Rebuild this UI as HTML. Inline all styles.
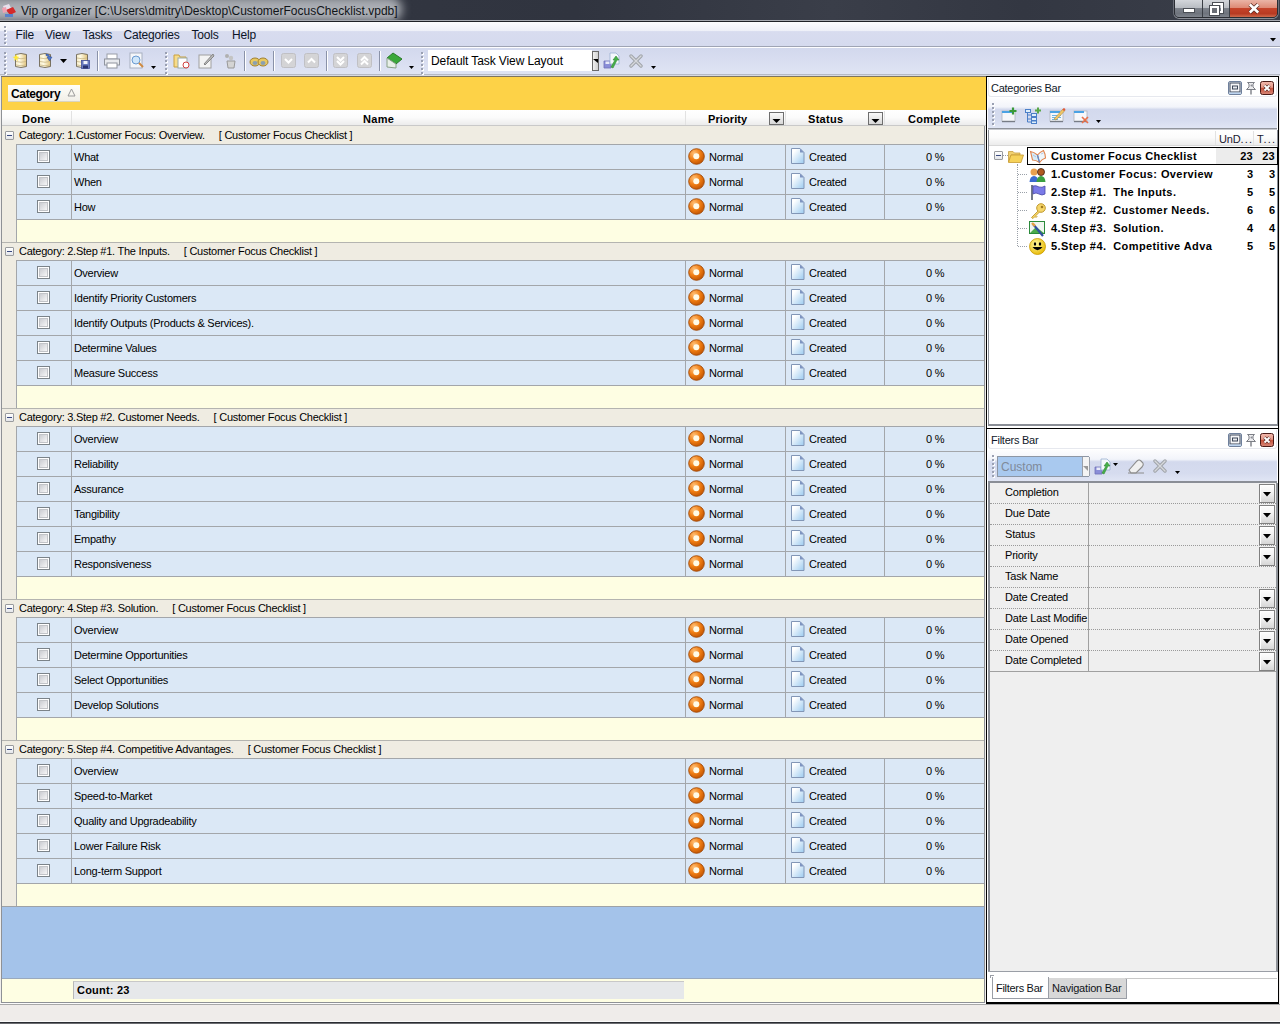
<!DOCTYPE html><html><head><meta charset="utf-8"><style>*{margin:0;padding:0;box-sizing:content-box}
html,body{width:1280px;height:1024px;overflow:hidden;background:#f0eeec;font-family:"Liberation Sans", sans-serif;position:relative}
.ab{position:absolute}
.t11{font-size:11px;letter-spacing:-0.25px;color:#000;white-space:nowrap;position:absolute;line-height:13px}
.b11{font-size:11px;font-weight:bold;color:#000;white-space:nowrap;position:absolute;line-height:13px}
</style></head><body><div class="ab" style="left:0;top:0;width:1280px;height:20px;overflow:hidden;background:linear-gradient(90deg,#343843 0%,#30343f 45%,#3a3e49 65%,#333742 80%,#3b3f4a 100%)"><div class="ab" style="left:-20px;top:-4px;width:422px;height:26px;border-radius:13px;background:linear-gradient(#9ea2a8,#b0b3b9 60%,#a4a8ae);filter:blur(5px)"></div></div><div class="ab" style="left:0;top:20px;width:1280px;height:1px;background:#a6a9b0"></div><div class="ab" style="left:0;top:21px;width:1280px;height:1px;background:#1e2126"></div><svg class="ab" style="left:1px;top:2px" width="16" height="16" viewBox="0 0 16 16"><path d="M2 4 L8 2 L10 6 L4 9 Z" fill="#e8e0ec"/><path d="M5 8 L12 5 L15 10 L9 13 Z" fill="#d42a2a"/><path d="M4 12 L12 12 L12 15 L4 15 Z" fill="#5a82c8"/><path d="M1 6 L5 5 L6 10 L2 11 Z" fill="#f0a0b0"/></svg><div class="ab" style="left:21px;top:4px;font-size:12px;line-height:15px;color:#101418;white-space:nowrap">Vip organizer [C:\Users\dmitry\Desktop\CustomerFocusChecklist.vpdb]</div><div class="ab" style="left:1174px;top:-1px;width:102px;height:17px;border:1px solid #2a2d33;border-radius:0 0 5px 5px;overflow:hidden;box-shadow:0 1px 0 rgba(220,222,228,0.5), 1px 0 0 rgba(220,222,228,0.3), -1px 0 0 rgba(220,222,228,0.3)"><div class="ab" style="left:0;top:0;width:27px;height:17px;background:linear-gradient(#d3d6db 0%,#b9bdc3 45%,#7d828b 50%,#6f747d 80%,#80858e 100%)"></div><div class="ab" style="left:27px;top:0;width:1px;height:17px;background:#3a3e45"></div><div class="ab" style="left:28px;top:0;width:26px;height:17px;background:linear-gradient(#d3d6db 0%,#b9bdc3 45%,#7d828b 50%,#6f747d 80%,#80858e 100%)"></div><div class="ab" style="left:54px;top:0;width:1px;height:17px;background:#3a3e45"></div><div class="ab" style="left:55px;top:0;width:47px;height:17px;background:linear-gradient(#eab4a6 0%,#de8a76 45%,#c5432a 50%,#b83a22 80%,#cf6a4c 100%)"></div><div class="ab" style="left:9px;top:9px;width:10px;height:3px;background:#fff;outline:1px solid #4a4e55"></div><div class="ab" style="left:38px;top:3px;width:6px;height:6px;border:2px solid #fff;outline:1px solid #4a4e55"></div><div class="ab" style="left:35px;top:6px;width:5px;height:5px;border:2px solid #fff;background:#6a6e76;outline:1px solid #4a4e55"></div><svg class="ab" style="left:73px;top:3px" width="12" height="11" viewBox="0 0 12 11"><path d="M1.8 1.5 L10.2 9.5 M10.2 1.5 L1.8 9.5" stroke="#5a3028" stroke-width="4"/><path d="M1.8 1.5 L10.2 9.5 M10.2 1.5 L1.8 9.5" stroke="#fff" stroke-width="2.6"/></svg></div><div class="ab" style="left:0;top:22px;width:1280px;height:24px;background:linear-gradient(#fbfcfe 0,#eef0f8 36%,#d8dcef 40%,#d5daee 100%)"></div><div class="ab" style="left:0;top:46px;width:1280px;height:1px;background:#9fa4b4"></div><div class="ab" style="left:4px;top:26px;width:2px;height:2px;background:#9aa0b2;box-shadow:1px 1px 0 #fff"></div><div class="ab" style="left:4px;top:30px;width:2px;height:2px;background:#9aa0b2;box-shadow:1px 1px 0 #fff"></div><div class="ab" style="left:4px;top:34px;width:2px;height:2px;background:#9aa0b2;box-shadow:1px 1px 0 #fff"></div><div class="ab" style="left:4px;top:38px;width:2px;height:2px;background:#9aa0b2;box-shadow:1px 1px 0 #fff"></div><div class="ab" style="left:4px;top:42px;width:2px;height:2px;background:#9aa0b2;box-shadow:1px 1px 0 #fff"></div><div class="ab" style="left:15.5px;top:28px;font-size:12px;line-height:15px;color:#0c1426;letter-spacing:-0.2px;white-space:nowrap">File</div><div class="ab" style="left:45px;top:28px;font-size:12px;line-height:15px;color:#0c1426;letter-spacing:-0.2px;white-space:nowrap">View</div><div class="ab" style="left:82.5px;top:28px;font-size:12px;line-height:15px;color:#0c1426;letter-spacing:-0.2px;white-space:nowrap">Tasks</div><div class="ab" style="left:123.5px;top:28px;font-size:12px;line-height:15px;color:#0c1426;letter-spacing:-0.2px;white-space:nowrap">Categories</div><div class="ab" style="left:191.5px;top:28px;font-size:12px;line-height:15px;color:#0c1426;letter-spacing:-0.2px;white-space:nowrap">Tools</div><div class="ab" style="left:232px;top:28px;font-size:12px;line-height:15px;color:#0c1426;letter-spacing:-0.2px;white-space:nowrap">Help</div><svg class="ab" style="left:1270px;top:38px" width="7" height="4"><path d="M0 0 H6 L3 3.5 Z" fill="#000"/></svg><div class="ab" style="left:0;top:47px;width:1280px;height:1px;background:#fdfdff"></div><div class="ab" style="left:0;top:48px;width:1280px;height:26px;background:linear-gradient(#d2d8ed,#dfe4f4)"></div><div class="ab" style="left:0;top:74px;width:1280px;height:2px;background:linear-gradient(#a4a9b6,#e8ebf2)"></div><div class="ab" style="left:4px;top:52px;width:2px;height:2px;background:#9aa0b2;box-shadow:1px 1px 0 #fff"></div><div class="ab" style="left:4px;top:56px;width:2px;height:2px;background:#9aa0b2;box-shadow:1px 1px 0 #fff"></div><div class="ab" style="left:4px;top:60px;width:2px;height:2px;background:#9aa0b2;box-shadow:1px 1px 0 #fff"></div><div class="ab" style="left:4px;top:64px;width:2px;height:2px;background:#9aa0b2;box-shadow:1px 1px 0 #fff"></div><div class="ab" style="left:4px;top:68px;width:2px;height:2px;background:#9aa0b2;box-shadow:1px 1px 0 #fff"></div><div class="ab" style="left:4px;top:72px;width:2px;height:2px;background:#9aa0b2;box-shadow:1px 1px 0 #fff"></div><svg class="ab" style="left:12px;top:52px" width="17" height="17" viewBox="0 0 17 17"><defs><linearGradient id="dbg" x1="0" x2="1"><stop offset="0" stop-color="#f6ecc8"/><stop offset="0.35" stop-color="#fffbe6"/><stop offset="1" stop-color="#e2c47c"/></linearGradient></defs><path d="M3.5 2.5 Q9 0.5 14.5 2.5 V14.5 Q9 16.5 3.5 14.5 Z" fill="url(#dbg)" stroke="#6e6656" stroke-width="0.9"/><path d="M4 6 Q9 7.5 14 6 M4 9.5 Q9 11 14 9.5 M4 13 Q9 14.5 14 13" fill="none" stroke="#c9b888" stroke-width="0.8"/><path d="M4 2 L5 4.5 L7.5 5 L5.3 6.3 L6 9 L4 7.2 L2 9 L2.7 6.3 L0.5 5 L3 4.5 Z" fill="#ffe838"/></svg><svg class="ab" style="left:36px;top:52px" width="17" height="17" viewBox="0 0 17 17"><defs><linearGradient id="dbg" x1="0" x2="1"><stop offset="0" stop-color="#f6ecc8"/><stop offset="0.35" stop-color="#fffbe6"/><stop offset="1" stop-color="#e2c47c"/></linearGradient></defs><path d="M3.5 2.5 Q9 0.5 14.5 2.5 V14.5 Q9 16.5 3.5 14.5 Z" fill="url(#dbg)" stroke="#6e6656" stroke-width="0.9"/><path d="M4 6 Q9 7.5 14 6 M4 9.5 Q9 11 14 9.5 M4 13 Q9 14.5 14 13" fill="none" stroke="#c9b888" stroke-width="0.8"/><path d="M10 2 Q13 1.5 14 5 L16 5 L13.5 9 L11 5 L12.5 5 Q12 3.5 10 3.5 Z" fill="#4f78d0" stroke="#2a4a90" stroke-width="0.5"/></svg><svg class="ab" style="left:60px;top:59px" width="8" height="5"><path d="M0 0 H7 L3.5 4 Z" fill="#000"/></svg><svg class="ab" style="left:73px;top:52px" width="17" height="17" viewBox="0 0 17 17"><defs><linearGradient id="dbg" x1="0" x2="1"><stop offset="0" stop-color="#f6ecc8"/><stop offset="0.35" stop-color="#fffbe6"/><stop offset="1" stop-color="#e2c47c"/></linearGradient></defs><path d="M3.5 2.5 Q9 0.5 14.5 2.5 V14.5 Q9 16.5 3.5 14.5 Z" fill="url(#dbg)" stroke="#6e6656" stroke-width="0.9"/><path d="M4 6 Q9 7.5 14 6 M4 9.5 Q9 11 14 9.5 M4 13 Q9 14.5 14 13" fill="none" stroke="#c9b888" stroke-width="0.8"/><rect x="8.5" y="8.5" width="8" height="8" fill="#6a7cc0" stroke="#44509a" stroke-width="0.8"/><rect x="10.5" y="9" width="4" height="3" fill="#f0f2fa"/><rect x="10" y="13.5" width="5" height="3" fill="#2a3470"/></svg><div class="ab" style="left:97px;top:51px;width:1px;height:20px;background:#8a92a8;box-shadow:1px 0 0 #fff"></div><svg class="ab" style="left:104px;top:53px" width="16" height="16" viewBox="0 0 16 16"><rect x="3" y="1" width="10" height="5" fill="#fff" stroke="#9a9ea8"/><rect x="0.5" y="6" width="15" height="6" fill="#e8eaee" stroke="#8f949e"/><rect x="3" y="10" width="10" height="5" fill="#fff" stroke="#8f949e"/></svg><svg class="ab" style="left:129px;top:52px" width="16" height="17" viewBox="0 0 16 17"><rect x="1" y="1" width="12" height="15" fill="#f4f6fa" stroke="#a8b0c0"/><circle cx="7" cy="8" r="4" fill="#cfe6fa" stroke="#6a9ad0"/><path d="M10 11 L14 15" stroke="#d08a40" stroke-width="2"/></svg><svg class="ab" style="left:151px;top:66px" width="6" height="4"><path d="M0 0 H5 L2.5 3 Z" fill="#000"/></svg><div class="ab" style="left:165px;top:52px;width:2px;height:2px;background:#9aa0b2;box-shadow:1px 1px 0 #fff"></div><div class="ab" style="left:165px;top:56px;width:2px;height:2px;background:#9aa0b2;box-shadow:1px 1px 0 #fff"></div><div class="ab" style="left:165px;top:60px;width:2px;height:2px;background:#9aa0b2;box-shadow:1px 1px 0 #fff"></div><div class="ab" style="left:165px;top:64px;width:2px;height:2px;background:#9aa0b2;box-shadow:1px 1px 0 #fff"></div><div class="ab" style="left:165px;top:68px;width:2px;height:2px;background:#9aa0b2;box-shadow:1px 1px 0 #fff"></div><div class="ab" style="left:165px;top:72px;width:2px;height:2px;background:#9aa0b2;box-shadow:1px 1px 0 #fff"></div><svg class="ab" style="left:173px;top:52px" width="17" height="17" viewBox="0 0 17 17"><path d="M1 3 H6 L7 5 H13 V15 H1 Z" fill="#f7dc8a" stroke="#c9a040"/><rect x="5" y="6" width="9" height="10" fill="#fff" stroke="#9aa"/><circle cx="13" cy="13" r="3" fill="#fff" stroke="#d04040"/></svg><svg class="ab" style="left:198px;top:52px" width="17" height="17" viewBox="0 0 17 17"><rect x="1" y="3" width="12" height="13" fill="#f3f3f3" stroke="#a0a0a0"/><path d="M6 12 L15 2 L16 4 L7 13 Z" fill="#b8b8b8" stroke="#888"/></svg><svg class="ab" style="left:222px;top:52px" width="17" height="17" viewBox="0 0 17 17"><circle cx="5" cy="4" r="2" fill="#b0b0b0"/><circle cx="9" cy="6" r="2.2" fill="#c4c4c4"/><path d="M5 9 H13 L12 16 H6 Z" fill="#d4d4d4" stroke="#999"/></svg><div class="ab" style="left:244px;top:51px;width:1px;height:20px;background:#8a92a8;box-shadow:1px 0 0 #fff"></div><svg class="ab" style="left:249px;top:54px" width="20" height="14" viewBox="0 0 20 14"><ellipse cx="6" cy="8" rx="5" ry="4" fill="#e8c860" stroke="#a08030"/><ellipse cx="14" cy="8" rx="5" ry="4" fill="#e8c860" stroke="#a08030"/><ellipse cx="6" cy="9" rx="2.5" ry="2" fill="#8aa0b0"/><ellipse cx="14" cy="9" rx="2.5" ry="2" fill="#8aa0b0"/></svg><div class="ab" style="left:273px;top:51px;width:1px;height:20px;background:#8a92a8;box-shadow:1px 0 0 #fff"></div><svg class="ab" style="left:281px;top:53px" width="15" height="15" viewBox="0 0 15 15"><rect x="0.5" y="0.5" width="14" height="14" rx="2" fill="#d4d4d6" stroke="#c0c0c4"/><path d="M4 6 L7.5 9.5 L11 6" fill="none" stroke="#fff" stroke-width="2"/></svg><svg class="ab" style="left:304px;top:53px" width="15" height="15" viewBox="0 0 15 15"><rect x="0.5" y="0.5" width="14" height="14" rx="2" fill="#d4d4d6" stroke="#c0c0c4"/><path d="M4 9.5 L7.5 6 L11 9.5" fill="none" stroke="#fff" stroke-width="2"/></svg><div class="ab" style="left:326px;top:51px;width:1px;height:20px;background:#8a92a8;box-shadow:1px 0 0 #fff"></div><svg class="ab" style="left:333px;top:53px" width="15" height="15" viewBox="0 0 15 15"><rect x="0.5" y="0.5" width="14" height="14" rx="2" fill="#d4d4d6" stroke="#c0c0c4"/><path d="M4 4 L7.5 7.5 L11 4 M4 8 L7.5 11.5 L11 8" fill="none" stroke="#fff" stroke-width="2"/></svg><svg class="ab" style="left:357px;top:53px" width="15" height="15" viewBox="0 0 15 15"><rect x="0.5" y="0.5" width="14" height="14" rx="2" fill="#d4d4d6" stroke="#c0c0c4"/><path d="M4 7.5 L7.5 4 L11 7.5 M4 11.5 L7.5 8 L11 11.5" fill="none" stroke="#fff" stroke-width="2"/></svg><div class="ab" style="left:379px;top:51px;width:1px;height:20px;background:#8a92a8;box-shadow:1px 0 0 #fff"></div><svg class="ab" style="left:385px;top:52px" width="18" height="17" viewBox="0 0 18 17"><path d="M2 6 L8 1 L17 7 L11 12 Z" fill="#3aa83a" stroke="#2a7a2a"/><path d="M2 6 L2 15 L11 16 L11 12 Z" fill="#e8f0e8" stroke="#88a088"/></svg><svg class="ab" style="left:409px;top:66px" width="6" height="4"><path d="M0 0 H5 L2.5 3 Z" fill="#000"/></svg><div class="ab" style="left:421px;top:52px;width:2px;height:2px;background:#9aa0b2;box-shadow:1px 1px 0 #fff"></div><div class="ab" style="left:421px;top:56px;width:2px;height:2px;background:#9aa0b2;box-shadow:1px 1px 0 #fff"></div><div class="ab" style="left:421px;top:60px;width:2px;height:2px;background:#9aa0b2;box-shadow:1px 1px 0 #fff"></div><div class="ab" style="left:421px;top:64px;width:2px;height:2px;background:#9aa0b2;box-shadow:1px 1px 0 #fff"></div><div class="ab" style="left:421px;top:68px;width:2px;height:2px;background:#9aa0b2;box-shadow:1px 1px 0 #fff"></div><div class="ab" style="left:421px;top:72px;width:2px;height:2px;background:#9aa0b2;box-shadow:1px 1px 0 #fff"></div><div class="ab" style="left:428px;top:50px;width:164px;height:21px;background:#fff"></div><div class="ab" style="left:431px;top:54px;font-size:12px;line-height:15px;color:#000;letter-spacing:-0.1px;white-space:nowrap">Default Task View Layout</div><div class="ab" style="left:592px;top:51px;width:7px;height:20px;background:linear-gradient(90deg,#f0f0f0,#d0d0d0);border:1px solid #6a6a6a;box-sizing:border-box"></div><svg class="ab" style="left:593px;top:59px" width="6" height="5"><path d="M0 0 H5 L5 4 Z" fill="#000"/></svg><svg class="ab" style="left:603px;top:52px" width="18" height="17" viewBox="0 0 18 17"><path d="M1 9 H8 V16 H1 Z" fill="#8a8ed8" stroke="#6f72b8" stroke-width="0.8"/><rect x="2.5" y="9.5" width="4" height="2.5" fill="#e8eaf8"/><path d="M7 1 H13 L16 4 V12 H7 Z" fill="#f4f8fc" stroke="#9ab0d0" stroke-width="0.8"/><path d="M8 15 L12 8 L10 8 L13 4 L16 8 L14 8 L10 16 Z" fill="#46b04a" stroke="#2f8a30" stroke-width="0.6"/></svg><svg class="ab" style="left:629px;top:54px" width="14" height="14" viewBox="0 0 14 14"><path d="M2 2 L12 12 M12 2 L2 12" stroke="#a0a4aa" stroke-width="3.4" stroke-linecap="round"/><path d="M2 2 L12 12 M12 2 L2 12" stroke="#d6d8dc" stroke-width="1.4" stroke-linecap="round"/></svg><svg class="ab" style="left:651px;top:66px" width="6" height="4"><path d="M0 0 H5 L2.5 3 Z" fill="#000"/></svg><div class="ab" style="left:1px;top:76px;width:982px;height:925px;border:1px solid #8e9196;background:#a4c3ea"></div><div class="ab" style="left:984px;top:76px;width:2px;height:50px;background:#fdd247"></div><div class="ab" style="left:1px;top:76px;width:985px;height:1px;background:#7d7460"></div><div class="ab" style="left:2px;top:77px;width:984px;height:33px;background:#fdd247"></div><div class="ab" style="left:8px;top:85px;width:72px;height:16px;background:linear-gradient(#fffef8,#f1efe8);border-bottom:1px solid #d9d4c0"></div><div class="ab" style="left:11px;top:87px;font-size:12px;font-weight:bold;line-height:15px;letter-spacing:-0.35px;color:#000;white-space:nowrap">Category</div><svg class="ab" style="left:67px;top:88px" width="9" height="9" viewBox="0 0 9 9"><path d="M4.5 1 L8 8 H1 Z" fill="none" stroke="#9a9a9a" stroke-width="1"/></svg><div class="ab" style="left:2px;top:110px;width:984px;height:15px;background:linear-gradient(#ffffff 0%,#fbfbfb 50%,#ececec 100%)"></div><div class="ab" style="left:2px;top:125px;width:984px;height:1px;background:#c9c9c9"></div><div class="ab" style="left:71px;top:111px;width:1px;height:14px;background:#e2e2e2"></div><div class="ab" style="left:685px;top:111px;width:1px;height:14px;background:#e2e2e2"></div><div class="ab" style="left:785px;top:111px;width:1px;height:14px;background:#e2e2e2"></div><div class="ab" style="left:884px;top:111px;width:1px;height:14px;background:#e2e2e2"></div><div class="b11" style="left:22px;top:113px;letter-spacing:0.3px">Done</div><div class="b11" style="left:363px;top:113px;letter-spacing:0.3px">Name</div><div class="b11" style="left:708px;top:113px;letter-spacing:0.1px">Priority</div><div class="b11" style="left:808px;top:113px;letter-spacing:0.3px">Status</div><div class="b11" style="left:908px;top:113px;letter-spacing:0.3px">Complete</div><div class="ab" style="left:769px;top:112px;width:13px;height:11px;border:1px solid #6e6e6e;background:linear-gradient(#fafafa,#d8d8d8)"><svg class="ab" style="left:2px;top:6px" width="9" height="5"><path d="M0.5 0 H8.5 L4.5 4 Z" fill="#000"/></svg></div><div class="ab" style="left:868px;top:112px;width:13px;height:11px;border:1px solid #6e6e6e;background:linear-gradient(#fafafa,#d8d8d8)"><svg class="ab" style="left:2px;top:6px" width="9" height="5"><path d="M0.5 0 H8.5 L4.5 4 Z" fill="#000"/></svg></div><div class="ab" style="left:2px;top:126px;width:982px;height:18px;background:#efece2"></div><div style="position:absolute;left:5px;top:131px;width:7px;height:7px;border:1px solid #999b9e;border-radius:1px;background:linear-gradient(#fff,#e4e6ea)"><div style="position:absolute;left:1px;top:3px;width:5px;height:1px;background:#3a4a80"></div></div><div class="t11" style="left:19px;top:129px">Category: 1.Customer Focus: Overview. &nbsp;&nbsp;&nbsp;&nbsp;[ Customer Focus Checklist ]</div><div class="ab" style="left:2px;top:144px;width:14px;height:98px;background:#efece2"></div><div class="ab" style="left:16px;top:144px;width:1px;height:98px;background:#a3a6aa"></div><div class="ab" style="left:17px;top:144px;width:967px;height:1px;background:#a3a6aa"></div><div class="ab" style="left:17px;top:145px;width:967px;height:24px;background:#dbe8f6"></div><div class="ab" style="left:71px;top:145px;width:1px;height:24px;background:#a3a6aa"></div><div class="ab" style="left:685px;top:145px;width:1px;height:24px;background:#a3a6aa"></div><div class="ab" style="left:785px;top:145px;width:1px;height:24px;background:#a3a6aa"></div><div class="ab" style="left:884px;top:145px;width:1px;height:24px;background:#a3a6aa"></div><div style="position:absolute;left:37px;top:150px;width:11px;height:11px;border:1px solid #7b8389;background:#fff"><div style="position:absolute;left:1px;top:1px;width:7px;height:7px;border:1px solid #c2c4c8;background:linear-gradient(135deg,#cbcdd2,#f6f6f7)"></div></div><div class="t11" style="left:74px;top:151px">What</div><svg style="position:absolute;left:688px;top:148px" width="17" height="17" viewBox="0 0 17 17"><defs><radialGradient id="po" cx="0.35" cy="0.3" r="0.8"><stop offset="0" stop-color="#ffc27a"/><stop offset="0.5" stop-color="#f07d12"/><stop offset="1" stop-color="#b84d00"/></radialGradient></defs><circle cx="8.5" cy="8.5" r="7.8" fill="url(#po)" stroke="#a24a08" stroke-width="0.9"/><circle cx="8.3" cy="8.3" r="3" fill="#fffbe8"/></svg><div class="t11" style="left:709px;top:151px">Normal</div><svg style="position:absolute;left:791px;top:148px" width="14" height="17" viewBox="0 0 14 17"><defs><linearGradient id="dg" x1="0" y1="0" x2="1" y2="1"><stop offset="0.2" stop-color="#ffffff"/><stop offset="1" stop-color="#9ccbf0"/></linearGradient></defs><path d="M0.5 0.5 H9 L13 4.5 V15.5 H0.5 Z" fill="url(#dg)" stroke="#8296b6" stroke-width="1"/><path d="M9 0.5 V4.5 H13 Z" fill="#7d93c0"/></svg><div class="t11" style="left:809px;top:151px">Created</div><div class="t11" style="left:926px;top:151px">0 %</div><div class="ab" style="left:17px;top:169px;width:967px;height:1px;background:#a3a6aa"></div><div class="ab" style="left:17px;top:170px;width:967px;height:24px;background:#dbe8f6"></div><div class="ab" style="left:71px;top:170px;width:1px;height:24px;background:#a3a6aa"></div><div class="ab" style="left:685px;top:170px;width:1px;height:24px;background:#a3a6aa"></div><div class="ab" style="left:785px;top:170px;width:1px;height:24px;background:#a3a6aa"></div><div class="ab" style="left:884px;top:170px;width:1px;height:24px;background:#a3a6aa"></div><div style="position:absolute;left:37px;top:175px;width:11px;height:11px;border:1px solid #7b8389;background:#fff"><div style="position:absolute;left:1px;top:1px;width:7px;height:7px;border:1px solid #c2c4c8;background:linear-gradient(135deg,#cbcdd2,#f6f6f7)"></div></div><div class="t11" style="left:74px;top:176px">When</div><svg style="position:absolute;left:688px;top:173px" width="17" height="17" viewBox="0 0 17 17"><defs><radialGradient id="po" cx="0.35" cy="0.3" r="0.8"><stop offset="0" stop-color="#ffc27a"/><stop offset="0.5" stop-color="#f07d12"/><stop offset="1" stop-color="#b84d00"/></radialGradient></defs><circle cx="8.5" cy="8.5" r="7.8" fill="url(#po)" stroke="#a24a08" stroke-width="0.9"/><circle cx="8.3" cy="8.3" r="3" fill="#fffbe8"/></svg><div class="t11" style="left:709px;top:176px">Normal</div><svg style="position:absolute;left:791px;top:173px" width="14" height="17" viewBox="0 0 14 17"><defs><linearGradient id="dg" x1="0" y1="0" x2="1" y2="1"><stop offset="0.2" stop-color="#ffffff"/><stop offset="1" stop-color="#9ccbf0"/></linearGradient></defs><path d="M0.5 0.5 H9 L13 4.5 V15.5 H0.5 Z" fill="url(#dg)" stroke="#8296b6" stroke-width="1"/><path d="M9 0.5 V4.5 H13 Z" fill="#7d93c0"/></svg><div class="t11" style="left:809px;top:176px">Created</div><div class="t11" style="left:926px;top:176px">0 %</div><div class="ab" style="left:17px;top:194px;width:967px;height:1px;background:#a3a6aa"></div><div class="ab" style="left:17px;top:195px;width:967px;height:24px;background:#dbe8f6"></div><div class="ab" style="left:71px;top:195px;width:1px;height:24px;background:#a3a6aa"></div><div class="ab" style="left:685px;top:195px;width:1px;height:24px;background:#a3a6aa"></div><div class="ab" style="left:785px;top:195px;width:1px;height:24px;background:#a3a6aa"></div><div class="ab" style="left:884px;top:195px;width:1px;height:24px;background:#a3a6aa"></div><div style="position:absolute;left:37px;top:200px;width:11px;height:11px;border:1px solid #7b8389;background:#fff"><div style="position:absolute;left:1px;top:1px;width:7px;height:7px;border:1px solid #c2c4c8;background:linear-gradient(135deg,#cbcdd2,#f6f6f7)"></div></div><div class="t11" style="left:74px;top:201px">How</div><svg style="position:absolute;left:688px;top:198px" width="17" height="17" viewBox="0 0 17 17"><defs><radialGradient id="po" cx="0.35" cy="0.3" r="0.8"><stop offset="0" stop-color="#ffc27a"/><stop offset="0.5" stop-color="#f07d12"/><stop offset="1" stop-color="#b84d00"/></radialGradient></defs><circle cx="8.5" cy="8.5" r="7.8" fill="url(#po)" stroke="#a24a08" stroke-width="0.9"/><circle cx="8.3" cy="8.3" r="3" fill="#fffbe8"/></svg><div class="t11" style="left:709px;top:201px">Normal</div><svg style="position:absolute;left:791px;top:198px" width="14" height="17" viewBox="0 0 14 17"><defs><linearGradient id="dg" x1="0" y1="0" x2="1" y2="1"><stop offset="0.2" stop-color="#ffffff"/><stop offset="1" stop-color="#9ccbf0"/></linearGradient></defs><path d="M0.5 0.5 H9 L13 4.5 V15.5 H0.5 Z" fill="url(#dg)" stroke="#8296b6" stroke-width="1"/><path d="M9 0.5 V4.5 H13 Z" fill="#7d93c0"/></svg><div class="t11" style="left:809px;top:201px">Created</div><div class="t11" style="left:926px;top:201px">0 %</div><div class="ab" style="left:17px;top:219px;width:967px;height:1px;background:#a3a6aa"></div><div class="ab" style="left:17px;top:220px;width:967px;height:22px;background:#fefee3"></div><div class="ab" style="left:2px;top:242px;width:982px;height:18px;background:#efece2"></div><div class="ab" style="left:2px;top:242px;width:982px;height:1px;background:#b4b4b0"></div><div style="position:absolute;left:5px;top:247px;width:7px;height:7px;border:1px solid #999b9e;border-radius:1px;background:linear-gradient(#fff,#e4e6ea)"><div style="position:absolute;left:1px;top:3px;width:5px;height:1px;background:#3a4a80"></div></div><div class="t11" style="left:19px;top:245px">Category: 2.Step #1. The Inputs. &nbsp;&nbsp;&nbsp;&nbsp;[ Customer Focus Checklist ]</div><div class="ab" style="left:2px;top:260px;width:14px;height:148px;background:#efece2"></div><div class="ab" style="left:16px;top:260px;width:1px;height:148px;background:#a3a6aa"></div><div class="ab" style="left:17px;top:260px;width:967px;height:1px;background:#a3a6aa"></div><div class="ab" style="left:17px;top:261px;width:967px;height:24px;background:#dbe8f6"></div><div class="ab" style="left:71px;top:261px;width:1px;height:24px;background:#a3a6aa"></div><div class="ab" style="left:685px;top:261px;width:1px;height:24px;background:#a3a6aa"></div><div class="ab" style="left:785px;top:261px;width:1px;height:24px;background:#a3a6aa"></div><div class="ab" style="left:884px;top:261px;width:1px;height:24px;background:#a3a6aa"></div><div style="position:absolute;left:37px;top:266px;width:11px;height:11px;border:1px solid #7b8389;background:#fff"><div style="position:absolute;left:1px;top:1px;width:7px;height:7px;border:1px solid #c2c4c8;background:linear-gradient(135deg,#cbcdd2,#f6f6f7)"></div></div><div class="t11" style="left:74px;top:267px">Overview</div><svg style="position:absolute;left:688px;top:264px" width="17" height="17" viewBox="0 0 17 17"><defs><radialGradient id="po" cx="0.35" cy="0.3" r="0.8"><stop offset="0" stop-color="#ffc27a"/><stop offset="0.5" stop-color="#f07d12"/><stop offset="1" stop-color="#b84d00"/></radialGradient></defs><circle cx="8.5" cy="8.5" r="7.8" fill="url(#po)" stroke="#a24a08" stroke-width="0.9"/><circle cx="8.3" cy="8.3" r="3" fill="#fffbe8"/></svg><div class="t11" style="left:709px;top:267px">Normal</div><svg style="position:absolute;left:791px;top:264px" width="14" height="17" viewBox="0 0 14 17"><defs><linearGradient id="dg" x1="0" y1="0" x2="1" y2="1"><stop offset="0.2" stop-color="#ffffff"/><stop offset="1" stop-color="#9ccbf0"/></linearGradient></defs><path d="M0.5 0.5 H9 L13 4.5 V15.5 H0.5 Z" fill="url(#dg)" stroke="#8296b6" stroke-width="1"/><path d="M9 0.5 V4.5 H13 Z" fill="#7d93c0"/></svg><div class="t11" style="left:809px;top:267px">Created</div><div class="t11" style="left:926px;top:267px">0 %</div><div class="ab" style="left:17px;top:285px;width:967px;height:1px;background:#a3a6aa"></div><div class="ab" style="left:17px;top:286px;width:967px;height:24px;background:#dbe8f6"></div><div class="ab" style="left:71px;top:286px;width:1px;height:24px;background:#a3a6aa"></div><div class="ab" style="left:685px;top:286px;width:1px;height:24px;background:#a3a6aa"></div><div class="ab" style="left:785px;top:286px;width:1px;height:24px;background:#a3a6aa"></div><div class="ab" style="left:884px;top:286px;width:1px;height:24px;background:#a3a6aa"></div><div style="position:absolute;left:37px;top:291px;width:11px;height:11px;border:1px solid #7b8389;background:#fff"><div style="position:absolute;left:1px;top:1px;width:7px;height:7px;border:1px solid #c2c4c8;background:linear-gradient(135deg,#cbcdd2,#f6f6f7)"></div></div><div class="t11" style="left:74px;top:292px">Identify Priority Customers</div><svg style="position:absolute;left:688px;top:289px" width="17" height="17" viewBox="0 0 17 17"><defs><radialGradient id="po" cx="0.35" cy="0.3" r="0.8"><stop offset="0" stop-color="#ffc27a"/><stop offset="0.5" stop-color="#f07d12"/><stop offset="1" stop-color="#b84d00"/></radialGradient></defs><circle cx="8.5" cy="8.5" r="7.8" fill="url(#po)" stroke="#a24a08" stroke-width="0.9"/><circle cx="8.3" cy="8.3" r="3" fill="#fffbe8"/></svg><div class="t11" style="left:709px;top:292px">Normal</div><svg style="position:absolute;left:791px;top:289px" width="14" height="17" viewBox="0 0 14 17"><defs><linearGradient id="dg" x1="0" y1="0" x2="1" y2="1"><stop offset="0.2" stop-color="#ffffff"/><stop offset="1" stop-color="#9ccbf0"/></linearGradient></defs><path d="M0.5 0.5 H9 L13 4.5 V15.5 H0.5 Z" fill="url(#dg)" stroke="#8296b6" stroke-width="1"/><path d="M9 0.5 V4.5 H13 Z" fill="#7d93c0"/></svg><div class="t11" style="left:809px;top:292px">Created</div><div class="t11" style="left:926px;top:292px">0 %</div><div class="ab" style="left:17px;top:310px;width:967px;height:1px;background:#a3a6aa"></div><div class="ab" style="left:17px;top:311px;width:967px;height:24px;background:#dbe8f6"></div><div class="ab" style="left:71px;top:311px;width:1px;height:24px;background:#a3a6aa"></div><div class="ab" style="left:685px;top:311px;width:1px;height:24px;background:#a3a6aa"></div><div class="ab" style="left:785px;top:311px;width:1px;height:24px;background:#a3a6aa"></div><div class="ab" style="left:884px;top:311px;width:1px;height:24px;background:#a3a6aa"></div><div style="position:absolute;left:37px;top:316px;width:11px;height:11px;border:1px solid #7b8389;background:#fff"><div style="position:absolute;left:1px;top:1px;width:7px;height:7px;border:1px solid #c2c4c8;background:linear-gradient(135deg,#cbcdd2,#f6f6f7)"></div></div><div class="t11" style="left:74px;top:317px">Identify Outputs (Products &amp; Services).</div><svg style="position:absolute;left:688px;top:314px" width="17" height="17" viewBox="0 0 17 17"><defs><radialGradient id="po" cx="0.35" cy="0.3" r="0.8"><stop offset="0" stop-color="#ffc27a"/><stop offset="0.5" stop-color="#f07d12"/><stop offset="1" stop-color="#b84d00"/></radialGradient></defs><circle cx="8.5" cy="8.5" r="7.8" fill="url(#po)" stroke="#a24a08" stroke-width="0.9"/><circle cx="8.3" cy="8.3" r="3" fill="#fffbe8"/></svg><div class="t11" style="left:709px;top:317px">Normal</div><svg style="position:absolute;left:791px;top:314px" width="14" height="17" viewBox="0 0 14 17"><defs><linearGradient id="dg" x1="0" y1="0" x2="1" y2="1"><stop offset="0.2" stop-color="#ffffff"/><stop offset="1" stop-color="#9ccbf0"/></linearGradient></defs><path d="M0.5 0.5 H9 L13 4.5 V15.5 H0.5 Z" fill="url(#dg)" stroke="#8296b6" stroke-width="1"/><path d="M9 0.5 V4.5 H13 Z" fill="#7d93c0"/></svg><div class="t11" style="left:809px;top:317px">Created</div><div class="t11" style="left:926px;top:317px">0 %</div><div class="ab" style="left:17px;top:335px;width:967px;height:1px;background:#a3a6aa"></div><div class="ab" style="left:17px;top:336px;width:967px;height:24px;background:#dbe8f6"></div><div class="ab" style="left:71px;top:336px;width:1px;height:24px;background:#a3a6aa"></div><div class="ab" style="left:685px;top:336px;width:1px;height:24px;background:#a3a6aa"></div><div class="ab" style="left:785px;top:336px;width:1px;height:24px;background:#a3a6aa"></div><div class="ab" style="left:884px;top:336px;width:1px;height:24px;background:#a3a6aa"></div><div style="position:absolute;left:37px;top:341px;width:11px;height:11px;border:1px solid #7b8389;background:#fff"><div style="position:absolute;left:1px;top:1px;width:7px;height:7px;border:1px solid #c2c4c8;background:linear-gradient(135deg,#cbcdd2,#f6f6f7)"></div></div><div class="t11" style="left:74px;top:342px">Determine Values</div><svg style="position:absolute;left:688px;top:339px" width="17" height="17" viewBox="0 0 17 17"><defs><radialGradient id="po" cx="0.35" cy="0.3" r="0.8"><stop offset="0" stop-color="#ffc27a"/><stop offset="0.5" stop-color="#f07d12"/><stop offset="1" stop-color="#b84d00"/></radialGradient></defs><circle cx="8.5" cy="8.5" r="7.8" fill="url(#po)" stroke="#a24a08" stroke-width="0.9"/><circle cx="8.3" cy="8.3" r="3" fill="#fffbe8"/></svg><div class="t11" style="left:709px;top:342px">Normal</div><svg style="position:absolute;left:791px;top:339px" width="14" height="17" viewBox="0 0 14 17"><defs><linearGradient id="dg" x1="0" y1="0" x2="1" y2="1"><stop offset="0.2" stop-color="#ffffff"/><stop offset="1" stop-color="#9ccbf0"/></linearGradient></defs><path d="M0.5 0.5 H9 L13 4.5 V15.5 H0.5 Z" fill="url(#dg)" stroke="#8296b6" stroke-width="1"/><path d="M9 0.5 V4.5 H13 Z" fill="#7d93c0"/></svg><div class="t11" style="left:809px;top:342px">Created</div><div class="t11" style="left:926px;top:342px">0 %</div><div class="ab" style="left:17px;top:360px;width:967px;height:1px;background:#a3a6aa"></div><div class="ab" style="left:17px;top:361px;width:967px;height:24px;background:#dbe8f6"></div><div class="ab" style="left:71px;top:361px;width:1px;height:24px;background:#a3a6aa"></div><div class="ab" style="left:685px;top:361px;width:1px;height:24px;background:#a3a6aa"></div><div class="ab" style="left:785px;top:361px;width:1px;height:24px;background:#a3a6aa"></div><div class="ab" style="left:884px;top:361px;width:1px;height:24px;background:#a3a6aa"></div><div style="position:absolute;left:37px;top:366px;width:11px;height:11px;border:1px solid #7b8389;background:#fff"><div style="position:absolute;left:1px;top:1px;width:7px;height:7px;border:1px solid #c2c4c8;background:linear-gradient(135deg,#cbcdd2,#f6f6f7)"></div></div><div class="t11" style="left:74px;top:367px">Measure Success</div><svg style="position:absolute;left:688px;top:364px" width="17" height="17" viewBox="0 0 17 17"><defs><radialGradient id="po" cx="0.35" cy="0.3" r="0.8"><stop offset="0" stop-color="#ffc27a"/><stop offset="0.5" stop-color="#f07d12"/><stop offset="1" stop-color="#b84d00"/></radialGradient></defs><circle cx="8.5" cy="8.5" r="7.8" fill="url(#po)" stroke="#a24a08" stroke-width="0.9"/><circle cx="8.3" cy="8.3" r="3" fill="#fffbe8"/></svg><div class="t11" style="left:709px;top:367px">Normal</div><svg style="position:absolute;left:791px;top:364px" width="14" height="17" viewBox="0 0 14 17"><defs><linearGradient id="dg" x1="0" y1="0" x2="1" y2="1"><stop offset="0.2" stop-color="#ffffff"/><stop offset="1" stop-color="#9ccbf0"/></linearGradient></defs><path d="M0.5 0.5 H9 L13 4.5 V15.5 H0.5 Z" fill="url(#dg)" stroke="#8296b6" stroke-width="1"/><path d="M9 0.5 V4.5 H13 Z" fill="#7d93c0"/></svg><div class="t11" style="left:809px;top:367px">Created</div><div class="t11" style="left:926px;top:367px">0 %</div><div class="ab" style="left:17px;top:385px;width:967px;height:1px;background:#a3a6aa"></div><div class="ab" style="left:17px;top:386px;width:967px;height:22px;background:#fefee3"></div><div class="ab" style="left:2px;top:408px;width:982px;height:18px;background:#efece2"></div><div class="ab" style="left:2px;top:408px;width:982px;height:1px;background:#b4b4b0"></div><div style="position:absolute;left:5px;top:413px;width:7px;height:7px;border:1px solid #999b9e;border-radius:1px;background:linear-gradient(#fff,#e4e6ea)"><div style="position:absolute;left:1px;top:3px;width:5px;height:1px;background:#3a4a80"></div></div><div class="t11" style="left:19px;top:411px">Category: 3.Step #2. Customer Needs. &nbsp;&nbsp;&nbsp;&nbsp;[ Customer Focus Checklist ]</div><div class="ab" style="left:2px;top:426px;width:14px;height:173px;background:#efece2"></div><div class="ab" style="left:16px;top:426px;width:1px;height:173px;background:#a3a6aa"></div><div class="ab" style="left:17px;top:426px;width:967px;height:1px;background:#a3a6aa"></div><div class="ab" style="left:17px;top:427px;width:967px;height:24px;background:#dbe8f6"></div><div class="ab" style="left:71px;top:427px;width:1px;height:24px;background:#a3a6aa"></div><div class="ab" style="left:685px;top:427px;width:1px;height:24px;background:#a3a6aa"></div><div class="ab" style="left:785px;top:427px;width:1px;height:24px;background:#a3a6aa"></div><div class="ab" style="left:884px;top:427px;width:1px;height:24px;background:#a3a6aa"></div><div style="position:absolute;left:37px;top:432px;width:11px;height:11px;border:1px solid #7b8389;background:#fff"><div style="position:absolute;left:1px;top:1px;width:7px;height:7px;border:1px solid #c2c4c8;background:linear-gradient(135deg,#cbcdd2,#f6f6f7)"></div></div><div class="t11" style="left:74px;top:433px">Overview</div><svg style="position:absolute;left:688px;top:430px" width="17" height="17" viewBox="0 0 17 17"><defs><radialGradient id="po" cx="0.35" cy="0.3" r="0.8"><stop offset="0" stop-color="#ffc27a"/><stop offset="0.5" stop-color="#f07d12"/><stop offset="1" stop-color="#b84d00"/></radialGradient></defs><circle cx="8.5" cy="8.5" r="7.8" fill="url(#po)" stroke="#a24a08" stroke-width="0.9"/><circle cx="8.3" cy="8.3" r="3" fill="#fffbe8"/></svg><div class="t11" style="left:709px;top:433px">Normal</div><svg style="position:absolute;left:791px;top:430px" width="14" height="17" viewBox="0 0 14 17"><defs><linearGradient id="dg" x1="0" y1="0" x2="1" y2="1"><stop offset="0.2" stop-color="#ffffff"/><stop offset="1" stop-color="#9ccbf0"/></linearGradient></defs><path d="M0.5 0.5 H9 L13 4.5 V15.5 H0.5 Z" fill="url(#dg)" stroke="#8296b6" stroke-width="1"/><path d="M9 0.5 V4.5 H13 Z" fill="#7d93c0"/></svg><div class="t11" style="left:809px;top:433px">Created</div><div class="t11" style="left:926px;top:433px">0 %</div><div class="ab" style="left:17px;top:451px;width:967px;height:1px;background:#a3a6aa"></div><div class="ab" style="left:17px;top:452px;width:967px;height:24px;background:#dbe8f6"></div><div class="ab" style="left:71px;top:452px;width:1px;height:24px;background:#a3a6aa"></div><div class="ab" style="left:685px;top:452px;width:1px;height:24px;background:#a3a6aa"></div><div class="ab" style="left:785px;top:452px;width:1px;height:24px;background:#a3a6aa"></div><div class="ab" style="left:884px;top:452px;width:1px;height:24px;background:#a3a6aa"></div><div style="position:absolute;left:37px;top:457px;width:11px;height:11px;border:1px solid #7b8389;background:#fff"><div style="position:absolute;left:1px;top:1px;width:7px;height:7px;border:1px solid #c2c4c8;background:linear-gradient(135deg,#cbcdd2,#f6f6f7)"></div></div><div class="t11" style="left:74px;top:458px">Reliability</div><svg style="position:absolute;left:688px;top:455px" width="17" height="17" viewBox="0 0 17 17"><defs><radialGradient id="po" cx="0.35" cy="0.3" r="0.8"><stop offset="0" stop-color="#ffc27a"/><stop offset="0.5" stop-color="#f07d12"/><stop offset="1" stop-color="#b84d00"/></radialGradient></defs><circle cx="8.5" cy="8.5" r="7.8" fill="url(#po)" stroke="#a24a08" stroke-width="0.9"/><circle cx="8.3" cy="8.3" r="3" fill="#fffbe8"/></svg><div class="t11" style="left:709px;top:458px">Normal</div><svg style="position:absolute;left:791px;top:455px" width="14" height="17" viewBox="0 0 14 17"><defs><linearGradient id="dg" x1="0" y1="0" x2="1" y2="1"><stop offset="0.2" stop-color="#ffffff"/><stop offset="1" stop-color="#9ccbf0"/></linearGradient></defs><path d="M0.5 0.5 H9 L13 4.5 V15.5 H0.5 Z" fill="url(#dg)" stroke="#8296b6" stroke-width="1"/><path d="M9 0.5 V4.5 H13 Z" fill="#7d93c0"/></svg><div class="t11" style="left:809px;top:458px">Created</div><div class="t11" style="left:926px;top:458px">0 %</div><div class="ab" style="left:17px;top:476px;width:967px;height:1px;background:#a3a6aa"></div><div class="ab" style="left:17px;top:477px;width:967px;height:24px;background:#dbe8f6"></div><div class="ab" style="left:71px;top:477px;width:1px;height:24px;background:#a3a6aa"></div><div class="ab" style="left:685px;top:477px;width:1px;height:24px;background:#a3a6aa"></div><div class="ab" style="left:785px;top:477px;width:1px;height:24px;background:#a3a6aa"></div><div class="ab" style="left:884px;top:477px;width:1px;height:24px;background:#a3a6aa"></div><div style="position:absolute;left:37px;top:482px;width:11px;height:11px;border:1px solid #7b8389;background:#fff"><div style="position:absolute;left:1px;top:1px;width:7px;height:7px;border:1px solid #c2c4c8;background:linear-gradient(135deg,#cbcdd2,#f6f6f7)"></div></div><div class="t11" style="left:74px;top:483px">Assurance</div><svg style="position:absolute;left:688px;top:480px" width="17" height="17" viewBox="0 0 17 17"><defs><radialGradient id="po" cx="0.35" cy="0.3" r="0.8"><stop offset="0" stop-color="#ffc27a"/><stop offset="0.5" stop-color="#f07d12"/><stop offset="1" stop-color="#b84d00"/></radialGradient></defs><circle cx="8.5" cy="8.5" r="7.8" fill="url(#po)" stroke="#a24a08" stroke-width="0.9"/><circle cx="8.3" cy="8.3" r="3" fill="#fffbe8"/></svg><div class="t11" style="left:709px;top:483px">Normal</div><svg style="position:absolute;left:791px;top:480px" width="14" height="17" viewBox="0 0 14 17"><defs><linearGradient id="dg" x1="0" y1="0" x2="1" y2="1"><stop offset="0.2" stop-color="#ffffff"/><stop offset="1" stop-color="#9ccbf0"/></linearGradient></defs><path d="M0.5 0.5 H9 L13 4.5 V15.5 H0.5 Z" fill="url(#dg)" stroke="#8296b6" stroke-width="1"/><path d="M9 0.5 V4.5 H13 Z" fill="#7d93c0"/></svg><div class="t11" style="left:809px;top:483px">Created</div><div class="t11" style="left:926px;top:483px">0 %</div><div class="ab" style="left:17px;top:501px;width:967px;height:1px;background:#a3a6aa"></div><div class="ab" style="left:17px;top:502px;width:967px;height:24px;background:#dbe8f6"></div><div class="ab" style="left:71px;top:502px;width:1px;height:24px;background:#a3a6aa"></div><div class="ab" style="left:685px;top:502px;width:1px;height:24px;background:#a3a6aa"></div><div class="ab" style="left:785px;top:502px;width:1px;height:24px;background:#a3a6aa"></div><div class="ab" style="left:884px;top:502px;width:1px;height:24px;background:#a3a6aa"></div><div style="position:absolute;left:37px;top:507px;width:11px;height:11px;border:1px solid #7b8389;background:#fff"><div style="position:absolute;left:1px;top:1px;width:7px;height:7px;border:1px solid #c2c4c8;background:linear-gradient(135deg,#cbcdd2,#f6f6f7)"></div></div><div class="t11" style="left:74px;top:508px">Tangibility</div><svg style="position:absolute;left:688px;top:505px" width="17" height="17" viewBox="0 0 17 17"><defs><radialGradient id="po" cx="0.35" cy="0.3" r="0.8"><stop offset="0" stop-color="#ffc27a"/><stop offset="0.5" stop-color="#f07d12"/><stop offset="1" stop-color="#b84d00"/></radialGradient></defs><circle cx="8.5" cy="8.5" r="7.8" fill="url(#po)" stroke="#a24a08" stroke-width="0.9"/><circle cx="8.3" cy="8.3" r="3" fill="#fffbe8"/></svg><div class="t11" style="left:709px;top:508px">Normal</div><svg style="position:absolute;left:791px;top:505px" width="14" height="17" viewBox="0 0 14 17"><defs><linearGradient id="dg" x1="0" y1="0" x2="1" y2="1"><stop offset="0.2" stop-color="#ffffff"/><stop offset="1" stop-color="#9ccbf0"/></linearGradient></defs><path d="M0.5 0.5 H9 L13 4.5 V15.5 H0.5 Z" fill="url(#dg)" stroke="#8296b6" stroke-width="1"/><path d="M9 0.5 V4.5 H13 Z" fill="#7d93c0"/></svg><div class="t11" style="left:809px;top:508px">Created</div><div class="t11" style="left:926px;top:508px">0 %</div><div class="ab" style="left:17px;top:526px;width:967px;height:1px;background:#a3a6aa"></div><div class="ab" style="left:17px;top:527px;width:967px;height:24px;background:#dbe8f6"></div><div class="ab" style="left:71px;top:527px;width:1px;height:24px;background:#a3a6aa"></div><div class="ab" style="left:685px;top:527px;width:1px;height:24px;background:#a3a6aa"></div><div class="ab" style="left:785px;top:527px;width:1px;height:24px;background:#a3a6aa"></div><div class="ab" style="left:884px;top:527px;width:1px;height:24px;background:#a3a6aa"></div><div style="position:absolute;left:37px;top:532px;width:11px;height:11px;border:1px solid #7b8389;background:#fff"><div style="position:absolute;left:1px;top:1px;width:7px;height:7px;border:1px solid #c2c4c8;background:linear-gradient(135deg,#cbcdd2,#f6f6f7)"></div></div><div class="t11" style="left:74px;top:533px">Empathy</div><svg style="position:absolute;left:688px;top:530px" width="17" height="17" viewBox="0 0 17 17"><defs><radialGradient id="po" cx="0.35" cy="0.3" r="0.8"><stop offset="0" stop-color="#ffc27a"/><stop offset="0.5" stop-color="#f07d12"/><stop offset="1" stop-color="#b84d00"/></radialGradient></defs><circle cx="8.5" cy="8.5" r="7.8" fill="url(#po)" stroke="#a24a08" stroke-width="0.9"/><circle cx="8.3" cy="8.3" r="3" fill="#fffbe8"/></svg><div class="t11" style="left:709px;top:533px">Normal</div><svg style="position:absolute;left:791px;top:530px" width="14" height="17" viewBox="0 0 14 17"><defs><linearGradient id="dg" x1="0" y1="0" x2="1" y2="1"><stop offset="0.2" stop-color="#ffffff"/><stop offset="1" stop-color="#9ccbf0"/></linearGradient></defs><path d="M0.5 0.5 H9 L13 4.5 V15.5 H0.5 Z" fill="url(#dg)" stroke="#8296b6" stroke-width="1"/><path d="M9 0.5 V4.5 H13 Z" fill="#7d93c0"/></svg><div class="t11" style="left:809px;top:533px">Created</div><div class="t11" style="left:926px;top:533px">0 %</div><div class="ab" style="left:17px;top:551px;width:967px;height:1px;background:#a3a6aa"></div><div class="ab" style="left:17px;top:552px;width:967px;height:24px;background:#dbe8f6"></div><div class="ab" style="left:71px;top:552px;width:1px;height:24px;background:#a3a6aa"></div><div class="ab" style="left:685px;top:552px;width:1px;height:24px;background:#a3a6aa"></div><div class="ab" style="left:785px;top:552px;width:1px;height:24px;background:#a3a6aa"></div><div class="ab" style="left:884px;top:552px;width:1px;height:24px;background:#a3a6aa"></div><div style="position:absolute;left:37px;top:557px;width:11px;height:11px;border:1px solid #7b8389;background:#fff"><div style="position:absolute;left:1px;top:1px;width:7px;height:7px;border:1px solid #c2c4c8;background:linear-gradient(135deg,#cbcdd2,#f6f6f7)"></div></div><div class="t11" style="left:74px;top:558px">Responsiveness</div><svg style="position:absolute;left:688px;top:555px" width="17" height="17" viewBox="0 0 17 17"><defs><radialGradient id="po" cx="0.35" cy="0.3" r="0.8"><stop offset="0" stop-color="#ffc27a"/><stop offset="0.5" stop-color="#f07d12"/><stop offset="1" stop-color="#b84d00"/></radialGradient></defs><circle cx="8.5" cy="8.5" r="7.8" fill="url(#po)" stroke="#a24a08" stroke-width="0.9"/><circle cx="8.3" cy="8.3" r="3" fill="#fffbe8"/></svg><div class="t11" style="left:709px;top:558px">Normal</div><svg style="position:absolute;left:791px;top:555px" width="14" height="17" viewBox="0 0 14 17"><defs><linearGradient id="dg" x1="0" y1="0" x2="1" y2="1"><stop offset="0.2" stop-color="#ffffff"/><stop offset="1" stop-color="#9ccbf0"/></linearGradient></defs><path d="M0.5 0.5 H9 L13 4.5 V15.5 H0.5 Z" fill="url(#dg)" stroke="#8296b6" stroke-width="1"/><path d="M9 0.5 V4.5 H13 Z" fill="#7d93c0"/></svg><div class="t11" style="left:809px;top:558px">Created</div><div class="t11" style="left:926px;top:558px">0 %</div><div class="ab" style="left:17px;top:576px;width:967px;height:1px;background:#a3a6aa"></div><div class="ab" style="left:17px;top:577px;width:967px;height:22px;background:#fefee3"></div><div class="ab" style="left:2px;top:599px;width:982px;height:18px;background:#efece2"></div><div class="ab" style="left:2px;top:599px;width:982px;height:1px;background:#b4b4b0"></div><div style="position:absolute;left:5px;top:604px;width:7px;height:7px;border:1px solid #999b9e;border-radius:1px;background:linear-gradient(#fff,#e4e6ea)"><div style="position:absolute;left:1px;top:3px;width:5px;height:1px;background:#3a4a80"></div></div><div class="t11" style="left:19px;top:602px">Category: 4.Step #3. Solution. &nbsp;&nbsp;&nbsp;&nbsp;[ Customer Focus Checklist ]</div><div class="ab" style="left:2px;top:617px;width:14px;height:123px;background:#efece2"></div><div class="ab" style="left:16px;top:617px;width:1px;height:123px;background:#a3a6aa"></div><div class="ab" style="left:17px;top:617px;width:967px;height:1px;background:#a3a6aa"></div><div class="ab" style="left:17px;top:618px;width:967px;height:24px;background:#dbe8f6"></div><div class="ab" style="left:71px;top:618px;width:1px;height:24px;background:#a3a6aa"></div><div class="ab" style="left:685px;top:618px;width:1px;height:24px;background:#a3a6aa"></div><div class="ab" style="left:785px;top:618px;width:1px;height:24px;background:#a3a6aa"></div><div class="ab" style="left:884px;top:618px;width:1px;height:24px;background:#a3a6aa"></div><div style="position:absolute;left:37px;top:623px;width:11px;height:11px;border:1px solid #7b8389;background:#fff"><div style="position:absolute;left:1px;top:1px;width:7px;height:7px;border:1px solid #c2c4c8;background:linear-gradient(135deg,#cbcdd2,#f6f6f7)"></div></div><div class="t11" style="left:74px;top:624px">Overview</div><svg style="position:absolute;left:688px;top:621px" width="17" height="17" viewBox="0 0 17 17"><defs><radialGradient id="po" cx="0.35" cy="0.3" r="0.8"><stop offset="0" stop-color="#ffc27a"/><stop offset="0.5" stop-color="#f07d12"/><stop offset="1" stop-color="#b84d00"/></radialGradient></defs><circle cx="8.5" cy="8.5" r="7.8" fill="url(#po)" stroke="#a24a08" stroke-width="0.9"/><circle cx="8.3" cy="8.3" r="3" fill="#fffbe8"/></svg><div class="t11" style="left:709px;top:624px">Normal</div><svg style="position:absolute;left:791px;top:621px" width="14" height="17" viewBox="0 0 14 17"><defs><linearGradient id="dg" x1="0" y1="0" x2="1" y2="1"><stop offset="0.2" stop-color="#ffffff"/><stop offset="1" stop-color="#9ccbf0"/></linearGradient></defs><path d="M0.5 0.5 H9 L13 4.5 V15.5 H0.5 Z" fill="url(#dg)" stroke="#8296b6" stroke-width="1"/><path d="M9 0.5 V4.5 H13 Z" fill="#7d93c0"/></svg><div class="t11" style="left:809px;top:624px">Created</div><div class="t11" style="left:926px;top:624px">0 %</div><div class="ab" style="left:17px;top:642px;width:967px;height:1px;background:#a3a6aa"></div><div class="ab" style="left:17px;top:643px;width:967px;height:24px;background:#dbe8f6"></div><div class="ab" style="left:71px;top:643px;width:1px;height:24px;background:#a3a6aa"></div><div class="ab" style="left:685px;top:643px;width:1px;height:24px;background:#a3a6aa"></div><div class="ab" style="left:785px;top:643px;width:1px;height:24px;background:#a3a6aa"></div><div class="ab" style="left:884px;top:643px;width:1px;height:24px;background:#a3a6aa"></div><div style="position:absolute;left:37px;top:648px;width:11px;height:11px;border:1px solid #7b8389;background:#fff"><div style="position:absolute;left:1px;top:1px;width:7px;height:7px;border:1px solid #c2c4c8;background:linear-gradient(135deg,#cbcdd2,#f6f6f7)"></div></div><div class="t11" style="left:74px;top:649px">Determine Opportunities</div><svg style="position:absolute;left:688px;top:646px" width="17" height="17" viewBox="0 0 17 17"><defs><radialGradient id="po" cx="0.35" cy="0.3" r="0.8"><stop offset="0" stop-color="#ffc27a"/><stop offset="0.5" stop-color="#f07d12"/><stop offset="1" stop-color="#b84d00"/></radialGradient></defs><circle cx="8.5" cy="8.5" r="7.8" fill="url(#po)" stroke="#a24a08" stroke-width="0.9"/><circle cx="8.3" cy="8.3" r="3" fill="#fffbe8"/></svg><div class="t11" style="left:709px;top:649px">Normal</div><svg style="position:absolute;left:791px;top:646px" width="14" height="17" viewBox="0 0 14 17"><defs><linearGradient id="dg" x1="0" y1="0" x2="1" y2="1"><stop offset="0.2" stop-color="#ffffff"/><stop offset="1" stop-color="#9ccbf0"/></linearGradient></defs><path d="M0.5 0.5 H9 L13 4.5 V15.5 H0.5 Z" fill="url(#dg)" stroke="#8296b6" stroke-width="1"/><path d="M9 0.5 V4.5 H13 Z" fill="#7d93c0"/></svg><div class="t11" style="left:809px;top:649px">Created</div><div class="t11" style="left:926px;top:649px">0 %</div><div class="ab" style="left:17px;top:667px;width:967px;height:1px;background:#a3a6aa"></div><div class="ab" style="left:17px;top:668px;width:967px;height:24px;background:#dbe8f6"></div><div class="ab" style="left:71px;top:668px;width:1px;height:24px;background:#a3a6aa"></div><div class="ab" style="left:685px;top:668px;width:1px;height:24px;background:#a3a6aa"></div><div class="ab" style="left:785px;top:668px;width:1px;height:24px;background:#a3a6aa"></div><div class="ab" style="left:884px;top:668px;width:1px;height:24px;background:#a3a6aa"></div><div style="position:absolute;left:37px;top:673px;width:11px;height:11px;border:1px solid #7b8389;background:#fff"><div style="position:absolute;left:1px;top:1px;width:7px;height:7px;border:1px solid #c2c4c8;background:linear-gradient(135deg,#cbcdd2,#f6f6f7)"></div></div><div class="t11" style="left:74px;top:674px">Select Opportunities</div><svg style="position:absolute;left:688px;top:671px" width="17" height="17" viewBox="0 0 17 17"><defs><radialGradient id="po" cx="0.35" cy="0.3" r="0.8"><stop offset="0" stop-color="#ffc27a"/><stop offset="0.5" stop-color="#f07d12"/><stop offset="1" stop-color="#b84d00"/></radialGradient></defs><circle cx="8.5" cy="8.5" r="7.8" fill="url(#po)" stroke="#a24a08" stroke-width="0.9"/><circle cx="8.3" cy="8.3" r="3" fill="#fffbe8"/></svg><div class="t11" style="left:709px;top:674px">Normal</div><svg style="position:absolute;left:791px;top:671px" width="14" height="17" viewBox="0 0 14 17"><defs><linearGradient id="dg" x1="0" y1="0" x2="1" y2="1"><stop offset="0.2" stop-color="#ffffff"/><stop offset="1" stop-color="#9ccbf0"/></linearGradient></defs><path d="M0.5 0.5 H9 L13 4.5 V15.5 H0.5 Z" fill="url(#dg)" stroke="#8296b6" stroke-width="1"/><path d="M9 0.5 V4.5 H13 Z" fill="#7d93c0"/></svg><div class="t11" style="left:809px;top:674px">Created</div><div class="t11" style="left:926px;top:674px">0 %</div><div class="ab" style="left:17px;top:692px;width:967px;height:1px;background:#a3a6aa"></div><div class="ab" style="left:17px;top:693px;width:967px;height:24px;background:#dbe8f6"></div><div class="ab" style="left:71px;top:693px;width:1px;height:24px;background:#a3a6aa"></div><div class="ab" style="left:685px;top:693px;width:1px;height:24px;background:#a3a6aa"></div><div class="ab" style="left:785px;top:693px;width:1px;height:24px;background:#a3a6aa"></div><div class="ab" style="left:884px;top:693px;width:1px;height:24px;background:#a3a6aa"></div><div style="position:absolute;left:37px;top:698px;width:11px;height:11px;border:1px solid #7b8389;background:#fff"><div style="position:absolute;left:1px;top:1px;width:7px;height:7px;border:1px solid #c2c4c8;background:linear-gradient(135deg,#cbcdd2,#f6f6f7)"></div></div><div class="t11" style="left:74px;top:699px">Develop Solutions</div><svg style="position:absolute;left:688px;top:696px" width="17" height="17" viewBox="0 0 17 17"><defs><radialGradient id="po" cx="0.35" cy="0.3" r="0.8"><stop offset="0" stop-color="#ffc27a"/><stop offset="0.5" stop-color="#f07d12"/><stop offset="1" stop-color="#b84d00"/></radialGradient></defs><circle cx="8.5" cy="8.5" r="7.8" fill="url(#po)" stroke="#a24a08" stroke-width="0.9"/><circle cx="8.3" cy="8.3" r="3" fill="#fffbe8"/></svg><div class="t11" style="left:709px;top:699px">Normal</div><svg style="position:absolute;left:791px;top:696px" width="14" height="17" viewBox="0 0 14 17"><defs><linearGradient id="dg" x1="0" y1="0" x2="1" y2="1"><stop offset="0.2" stop-color="#ffffff"/><stop offset="1" stop-color="#9ccbf0"/></linearGradient></defs><path d="M0.5 0.5 H9 L13 4.5 V15.5 H0.5 Z" fill="url(#dg)" stroke="#8296b6" stroke-width="1"/><path d="M9 0.5 V4.5 H13 Z" fill="#7d93c0"/></svg><div class="t11" style="left:809px;top:699px">Created</div><div class="t11" style="left:926px;top:699px">0 %</div><div class="ab" style="left:17px;top:717px;width:967px;height:1px;background:#a3a6aa"></div><div class="ab" style="left:17px;top:718px;width:967px;height:22px;background:#fefee3"></div><div class="ab" style="left:2px;top:740px;width:982px;height:18px;background:#efece2"></div><div class="ab" style="left:2px;top:740px;width:982px;height:1px;background:#b4b4b0"></div><div style="position:absolute;left:5px;top:745px;width:7px;height:7px;border:1px solid #999b9e;border-radius:1px;background:linear-gradient(#fff,#e4e6ea)"><div style="position:absolute;left:1px;top:3px;width:5px;height:1px;background:#3a4a80"></div></div><div class="t11" style="left:19px;top:743px">Category: 5.Step #4. Competitive Advantages. &nbsp;&nbsp;&nbsp;&nbsp;[ Customer Focus Checklist ]</div><div class="ab" style="left:2px;top:758px;width:14px;height:148px;background:#efece2"></div><div class="ab" style="left:16px;top:758px;width:1px;height:148px;background:#a3a6aa"></div><div class="ab" style="left:17px;top:758px;width:967px;height:1px;background:#a3a6aa"></div><div class="ab" style="left:17px;top:759px;width:967px;height:24px;background:#dbe8f6"></div><div class="ab" style="left:71px;top:759px;width:1px;height:24px;background:#a3a6aa"></div><div class="ab" style="left:685px;top:759px;width:1px;height:24px;background:#a3a6aa"></div><div class="ab" style="left:785px;top:759px;width:1px;height:24px;background:#a3a6aa"></div><div class="ab" style="left:884px;top:759px;width:1px;height:24px;background:#a3a6aa"></div><div style="position:absolute;left:37px;top:764px;width:11px;height:11px;border:1px solid #7b8389;background:#fff"><div style="position:absolute;left:1px;top:1px;width:7px;height:7px;border:1px solid #c2c4c8;background:linear-gradient(135deg,#cbcdd2,#f6f6f7)"></div></div><div class="t11" style="left:74px;top:765px">Overview</div><svg style="position:absolute;left:688px;top:762px" width="17" height="17" viewBox="0 0 17 17"><defs><radialGradient id="po" cx="0.35" cy="0.3" r="0.8"><stop offset="0" stop-color="#ffc27a"/><stop offset="0.5" stop-color="#f07d12"/><stop offset="1" stop-color="#b84d00"/></radialGradient></defs><circle cx="8.5" cy="8.5" r="7.8" fill="url(#po)" stroke="#a24a08" stroke-width="0.9"/><circle cx="8.3" cy="8.3" r="3" fill="#fffbe8"/></svg><div class="t11" style="left:709px;top:765px">Normal</div><svg style="position:absolute;left:791px;top:762px" width="14" height="17" viewBox="0 0 14 17"><defs><linearGradient id="dg" x1="0" y1="0" x2="1" y2="1"><stop offset="0.2" stop-color="#ffffff"/><stop offset="1" stop-color="#9ccbf0"/></linearGradient></defs><path d="M0.5 0.5 H9 L13 4.5 V15.5 H0.5 Z" fill="url(#dg)" stroke="#8296b6" stroke-width="1"/><path d="M9 0.5 V4.5 H13 Z" fill="#7d93c0"/></svg><div class="t11" style="left:809px;top:765px">Created</div><div class="t11" style="left:926px;top:765px">0 %</div><div class="ab" style="left:17px;top:783px;width:967px;height:1px;background:#a3a6aa"></div><div class="ab" style="left:17px;top:784px;width:967px;height:24px;background:#dbe8f6"></div><div class="ab" style="left:71px;top:784px;width:1px;height:24px;background:#a3a6aa"></div><div class="ab" style="left:685px;top:784px;width:1px;height:24px;background:#a3a6aa"></div><div class="ab" style="left:785px;top:784px;width:1px;height:24px;background:#a3a6aa"></div><div class="ab" style="left:884px;top:784px;width:1px;height:24px;background:#a3a6aa"></div><div style="position:absolute;left:37px;top:789px;width:11px;height:11px;border:1px solid #7b8389;background:#fff"><div style="position:absolute;left:1px;top:1px;width:7px;height:7px;border:1px solid #c2c4c8;background:linear-gradient(135deg,#cbcdd2,#f6f6f7)"></div></div><div class="t11" style="left:74px;top:790px">Speed-to-Market</div><svg style="position:absolute;left:688px;top:787px" width="17" height="17" viewBox="0 0 17 17"><defs><radialGradient id="po" cx="0.35" cy="0.3" r="0.8"><stop offset="0" stop-color="#ffc27a"/><stop offset="0.5" stop-color="#f07d12"/><stop offset="1" stop-color="#b84d00"/></radialGradient></defs><circle cx="8.5" cy="8.5" r="7.8" fill="url(#po)" stroke="#a24a08" stroke-width="0.9"/><circle cx="8.3" cy="8.3" r="3" fill="#fffbe8"/></svg><div class="t11" style="left:709px;top:790px">Normal</div><svg style="position:absolute;left:791px;top:787px" width="14" height="17" viewBox="0 0 14 17"><defs><linearGradient id="dg" x1="0" y1="0" x2="1" y2="1"><stop offset="0.2" stop-color="#ffffff"/><stop offset="1" stop-color="#9ccbf0"/></linearGradient></defs><path d="M0.5 0.5 H9 L13 4.5 V15.5 H0.5 Z" fill="url(#dg)" stroke="#8296b6" stroke-width="1"/><path d="M9 0.5 V4.5 H13 Z" fill="#7d93c0"/></svg><div class="t11" style="left:809px;top:790px">Created</div><div class="t11" style="left:926px;top:790px">0 %</div><div class="ab" style="left:17px;top:808px;width:967px;height:1px;background:#a3a6aa"></div><div class="ab" style="left:17px;top:809px;width:967px;height:24px;background:#dbe8f6"></div><div class="ab" style="left:71px;top:809px;width:1px;height:24px;background:#a3a6aa"></div><div class="ab" style="left:685px;top:809px;width:1px;height:24px;background:#a3a6aa"></div><div class="ab" style="left:785px;top:809px;width:1px;height:24px;background:#a3a6aa"></div><div class="ab" style="left:884px;top:809px;width:1px;height:24px;background:#a3a6aa"></div><div style="position:absolute;left:37px;top:814px;width:11px;height:11px;border:1px solid #7b8389;background:#fff"><div style="position:absolute;left:1px;top:1px;width:7px;height:7px;border:1px solid #c2c4c8;background:linear-gradient(135deg,#cbcdd2,#f6f6f7)"></div></div><div class="t11" style="left:74px;top:815px">Quality and Upgradeability</div><svg style="position:absolute;left:688px;top:812px" width="17" height="17" viewBox="0 0 17 17"><defs><radialGradient id="po" cx="0.35" cy="0.3" r="0.8"><stop offset="0" stop-color="#ffc27a"/><stop offset="0.5" stop-color="#f07d12"/><stop offset="1" stop-color="#b84d00"/></radialGradient></defs><circle cx="8.5" cy="8.5" r="7.8" fill="url(#po)" stroke="#a24a08" stroke-width="0.9"/><circle cx="8.3" cy="8.3" r="3" fill="#fffbe8"/></svg><div class="t11" style="left:709px;top:815px">Normal</div><svg style="position:absolute;left:791px;top:812px" width="14" height="17" viewBox="0 0 14 17"><defs><linearGradient id="dg" x1="0" y1="0" x2="1" y2="1"><stop offset="0.2" stop-color="#ffffff"/><stop offset="1" stop-color="#9ccbf0"/></linearGradient></defs><path d="M0.5 0.5 H9 L13 4.5 V15.5 H0.5 Z" fill="url(#dg)" stroke="#8296b6" stroke-width="1"/><path d="M9 0.5 V4.5 H13 Z" fill="#7d93c0"/></svg><div class="t11" style="left:809px;top:815px">Created</div><div class="t11" style="left:926px;top:815px">0 %</div><div class="ab" style="left:17px;top:833px;width:967px;height:1px;background:#a3a6aa"></div><div class="ab" style="left:17px;top:834px;width:967px;height:24px;background:#dbe8f6"></div><div class="ab" style="left:71px;top:834px;width:1px;height:24px;background:#a3a6aa"></div><div class="ab" style="left:685px;top:834px;width:1px;height:24px;background:#a3a6aa"></div><div class="ab" style="left:785px;top:834px;width:1px;height:24px;background:#a3a6aa"></div><div class="ab" style="left:884px;top:834px;width:1px;height:24px;background:#a3a6aa"></div><div style="position:absolute;left:37px;top:839px;width:11px;height:11px;border:1px solid #7b8389;background:#fff"><div style="position:absolute;left:1px;top:1px;width:7px;height:7px;border:1px solid #c2c4c8;background:linear-gradient(135deg,#cbcdd2,#f6f6f7)"></div></div><div class="t11" style="left:74px;top:840px">Lower Failure Risk</div><svg style="position:absolute;left:688px;top:837px" width="17" height="17" viewBox="0 0 17 17"><defs><radialGradient id="po" cx="0.35" cy="0.3" r="0.8"><stop offset="0" stop-color="#ffc27a"/><stop offset="0.5" stop-color="#f07d12"/><stop offset="1" stop-color="#b84d00"/></radialGradient></defs><circle cx="8.5" cy="8.5" r="7.8" fill="url(#po)" stroke="#a24a08" stroke-width="0.9"/><circle cx="8.3" cy="8.3" r="3" fill="#fffbe8"/></svg><div class="t11" style="left:709px;top:840px">Normal</div><svg style="position:absolute;left:791px;top:837px" width="14" height="17" viewBox="0 0 14 17"><defs><linearGradient id="dg" x1="0" y1="0" x2="1" y2="1"><stop offset="0.2" stop-color="#ffffff"/><stop offset="1" stop-color="#9ccbf0"/></linearGradient></defs><path d="M0.5 0.5 H9 L13 4.5 V15.5 H0.5 Z" fill="url(#dg)" stroke="#8296b6" stroke-width="1"/><path d="M9 0.5 V4.5 H13 Z" fill="#7d93c0"/></svg><div class="t11" style="left:809px;top:840px">Created</div><div class="t11" style="left:926px;top:840px">0 %</div><div class="ab" style="left:17px;top:858px;width:967px;height:1px;background:#a3a6aa"></div><div class="ab" style="left:17px;top:859px;width:967px;height:24px;background:#dbe8f6"></div><div class="ab" style="left:71px;top:859px;width:1px;height:24px;background:#a3a6aa"></div><div class="ab" style="left:685px;top:859px;width:1px;height:24px;background:#a3a6aa"></div><div class="ab" style="left:785px;top:859px;width:1px;height:24px;background:#a3a6aa"></div><div class="ab" style="left:884px;top:859px;width:1px;height:24px;background:#a3a6aa"></div><div style="position:absolute;left:37px;top:864px;width:11px;height:11px;border:1px solid #7b8389;background:#fff"><div style="position:absolute;left:1px;top:1px;width:7px;height:7px;border:1px solid #c2c4c8;background:linear-gradient(135deg,#cbcdd2,#f6f6f7)"></div></div><div class="t11" style="left:74px;top:865px">Long-term Support</div><svg style="position:absolute;left:688px;top:862px" width="17" height="17" viewBox="0 0 17 17"><defs><radialGradient id="po" cx="0.35" cy="0.3" r="0.8"><stop offset="0" stop-color="#ffc27a"/><stop offset="0.5" stop-color="#f07d12"/><stop offset="1" stop-color="#b84d00"/></radialGradient></defs><circle cx="8.5" cy="8.5" r="7.8" fill="url(#po)" stroke="#a24a08" stroke-width="0.9"/><circle cx="8.3" cy="8.3" r="3" fill="#fffbe8"/></svg><div class="t11" style="left:709px;top:865px">Normal</div><svg style="position:absolute;left:791px;top:862px" width="14" height="17" viewBox="0 0 14 17"><defs><linearGradient id="dg" x1="0" y1="0" x2="1" y2="1"><stop offset="0.2" stop-color="#ffffff"/><stop offset="1" stop-color="#9ccbf0"/></linearGradient></defs><path d="M0.5 0.5 H9 L13 4.5 V15.5 H0.5 Z" fill="url(#dg)" stroke="#8296b6" stroke-width="1"/><path d="M9 0.5 V4.5 H13 Z" fill="#7d93c0"/></svg><div class="t11" style="left:809px;top:865px">Created</div><div class="t11" style="left:926px;top:865px">0 %</div><div class="ab" style="left:17px;top:883px;width:967px;height:1px;background:#a3a6aa"></div><div class="ab" style="left:17px;top:884px;width:967px;height:22px;background:#fefee3"></div><div class="ab" style="left:2px;top:906px;width:982px;height:1px;background:#9ea2a6"></div><div class="ab" style="left:2px;top:978px;width:982px;height:1px;background:#9aa9bd"></div><div class="ab" style="left:2px;top:979px;width:982px;height:23px;background:#fefee3"></div><div class="ab" style="left:73px;top:981px;width:611px;height:18px;background:#e6e8ea;border-left:1px solid #b8b8b8;border-top:1px solid #c8c8c8;box-sizing:border-box"></div><div class="b11" style="left:77px;top:984px;letter-spacing:0.2px">Count: 23</div><div class="ab" style="left:986px;top:76px;width:291px;height:351px;border:1px solid #000;border-bottom:none;background:#fff"></div><div class="ab" style="left:988px;top:78px;width:287px;height:18px;background:#fff;border:1px solid #e6e8ee;border-top:none;border-radius:0 0 3px 3px"></div><div class="ab" style="left:991px;top:82px;font-size:11px;line-height:13px;letter-spacing:-0.25px;color:#101828;white-space:nowrap">Categories Bar</div><svg class="ab" style="left:1228px;top:81px" width="15" height="14" viewBox="0 0 15 14"><rect x="0.5" y="0.5" width="13" height="13" rx="1.5" fill="#e4ecf6" stroke="#6f809c"/><rect x="2" y="2" width="10" height="9" fill="#f6f6f8" stroke="#3c4658" stroke-width="1"/><rect x="4.5" y="5" width="5" height="3" fill="#e8eaee" stroke="#3c4658" stroke-width="1"/><rect x="1.5" y="11.5" width="11" height="1.5" fill="#bcd4f0"/></svg><svg class="ab" style="left:1245px;top:81px" width="12" height="14" viewBox="0 0 12 14"><path d="M2.5 1.5 H9.5 L8 3 L8 6 L10.5 8.5 H1.5 L4 6 L4 3 Z" fill="#ececee" stroke="#7c7f86" stroke-width="1"/><circle cx="6.5" cy="4.5" r="1" fill="#8a8d94"/><path d="M6 9 V13.5" stroke="#7c7f86" stroke-width="1.4"/></svg><svg class="ab" style="left:1260px;top:81px" width="14" height="14" viewBox="0 0 14 14"><defs><linearGradient id="cbg76" x1="0" y1="0" x2="0" y2="1"><stop offset="0" stop-color="#f2b8ac"/><stop offset="0.45" stop-color="#e49a8a"/><stop offset="0.5" stop-color="#c4503a"/><stop offset="1" stop-color="#d88878"/></linearGradient></defs><rect x="0.5" y="0.5" width="13" height="13" rx="2" fill="url(#cbg76)" stroke="#4a1a16"/><path d="M4.5 4.5 L9.5 9.5 M9.5 4.5 L4.5 9.5" stroke="#5a2a24" stroke-width="3.2"/><path d="M4.5 4.5 L9.5 9.5 M9.5 4.5 L4.5 9.5" stroke="#fff" stroke-width="1.9"/></svg><div class="ab" style="left:988px;top:98px;width:289px;height:30px;background:linear-gradient(#fdfdfe 0%,#f2f4fa 30%,#d3d9ed 38%,#d6dcef 75%,#e0e5f4 100%)"></div><div class="ab" style="left:992px;top:103px;width:2px;height:2px;background:#9aa0b2;box-shadow:1px 1px 0 #fff"></div><div class="ab" style="left:992px;top:107px;width:2px;height:2px;background:#9aa0b2;box-shadow:1px 1px 0 #fff"></div><div class="ab" style="left:992px;top:111px;width:2px;height:2px;background:#9aa0b2;box-shadow:1px 1px 0 #fff"></div><div class="ab" style="left:992px;top:115px;width:2px;height:2px;background:#9aa0b2;box-shadow:1px 1px 0 #fff"></div><div class="ab" style="left:992px;top:119px;width:2px;height:2px;background:#9aa0b2;box-shadow:1px 1px 0 #fff"></div><div class="ab" style="left:992px;top:123px;width:2px;height:2px;background:#9aa0b2;box-shadow:1px 1px 0 #fff"></div><svg class="ab" style="left:1001px;top:107px" width="16" height="16" viewBox="0 0 16 16"><rect x="1" y="4" width="13" height="10" fill="#f6f7fa" stroke="#b0b4bc" stroke-width="0.8"/><rect x="1" y="4" width="10" height="2" fill="#4aa2e4"/><rect x="1" y="14" width="13" height="1.2" fill="#777c86"/><path d="M12 0.5 V7.5 M8.5 4 H15.5" stroke="#3a9a3a" stroke-width="2.2"/></svg><svg class="ab" style="left:1025px;top:107px" width="17" height="17" viewBox="0 0 17 17"><rect x="0.5" y="2.5" width="5" height="3" fill="#dfeefa" stroke="#4b7fc8"/><path d="M2.5 5.5 V15 H6" stroke="#4b7fc8" fill="none"/><rect x="6.5" y="6.5" width="5" height="3" fill="#dfeefa" stroke="#4b7fc8"/><rect x="6.5" y="10.5" width="5" height="3" fill="#dfeefa" stroke="#4b7fc8"/><rect x="6.5" y="14" width="5" height="2.5" fill="#dfeefa" stroke="#4b7fc8"/><path d="M2.5 8 H6.5 M2.5 12 H6.5" stroke="#4b7fc8"/><path d="M13 0.5 V6.5 M10 3.5 H16" stroke="#5aa848" stroke-width="2"/></svg><svg class="ab" style="left:1049px;top:107px" width="17" height="16" viewBox="0 0 17 16"><rect x="1" y="4" width="13" height="10" fill="#f6f7fa" stroke="#b0b4bc" stroke-width="0.8"/><rect x="1" y="4" width="10" height="2" fill="#4aa2e4"/><rect x="1" y="14" width="13" height="1.2" fill="#777c86"/><path d="M3 8.5 H12 M3 10.5 H12 M3 12.5 H9" stroke="#5aaae0" stroke-width="0.9"/><path d="M5 12 L14 2 L16 3.5 L7 13 Z" fill="#f0c868" stroke="#b08a3a" stroke-width="0.6"/><circle cx="15" cy="2.5" r="1.3" fill="#e05a3a"/></svg><svg class="ab" style="left:1073px;top:107px" width="17" height="17" viewBox="0 0 17 17"><rect x="1" y="4" width="13" height="10" fill="#f6f7fa" stroke="#b0b4bc" stroke-width="0.8"/><rect x="1" y="4" width="10" height="2" fill="#4aa2e4"/><rect x="1" y="14" width="13" height="1.2" fill="#777c86"/><path d="M9 10 L15 16 M15 10 L9 16" stroke="#e8704a" stroke-width="1.7"/></svg><svg class="ab" style="left:1096px;top:120px" width="6" height="4"><path d="M0 0 H5 L2.5 3 Z" fill="#000"/></svg><div class="ab" style="left:988px;top:128px;width:289px;height:1px;background:#8f939b"></div><div class="ab" style="left:988px;top:129px;width:289px;height:1px;background:#c8cad0"></div><div class="ab" style="left:988px;top:130px;width:1px;height:295px;background:#8a8e96"></div><div class="ab" style="left:1277px;top:130px;width:1px;height:295px;background:#8a8e96"></div><div class="ab" style="left:988px;top:424px;width:290px;height:2px;background:#8a8e96"></div><div class="ab" style="left:989px;top:130px;width:288px;height:15px;background:linear-gradient(#ffffff 0%,#fbfbfb 50%,#ececec 100%)"></div><div class="ab" style="left:989px;top:145px;width:288px;height:1px;background:#d8d8d8"></div><div class="ab" style="left:1215px;top:131px;width:1px;height:14px;background:#e2e2e2"></div><div class="ab" style="left:1253px;top:131px;width:1px;height:14px;background:#e2e2e2"></div><div class="ab" style="left:1219px;top:133px;font-size:11px;line-height:13px;color:#1a2030;letter-spacing:-0.2px;white-space:nowrap">UnD<span style="letter-spacing:1.2px">...</span></div><div class="ab" style="left:1257px;top:133px;font-size:11px;line-height:13px;color:#1a2030;letter-spacing:-0.2px;white-space:nowrap">T<span style="letter-spacing:1.2px">...</span></div><div class="ab" style="left:1216px;top:148px;width:61px;height:16px;background:#ececec"></div><div class="ab" style="left:1027px;top:147px;width:249px;height:16px;border:1px solid #000"></div><div style="position:absolute;left:994px;top:151px;width:7px;height:7px;border:1px solid #999b9e;border-radius:1px;background:linear-gradient(#fff,#e4e6ea)"><div style="position:absolute;left:1px;top:3px;width:5px;height:1px;background:#3a4a80"></div></div><svg class="ab" style="left:1008px;top:150px" width="16" height="13" viewBox="0 0 16 13"><path d="M0.5 1.5 H5 L6.5 3 H12 V5 H3 L0.5 12 Z" fill="#f0d070" stroke="#c8a040" stroke-width="0.8"/><path d="M3 5 H15.5 L13 12.5 H0.5 Z" fill="#f6d25a" stroke="#c89a30" stroke-width="0.8"/></svg><svg class="ab" style="left:1029px;top:149px" width="18" height="15" viewBox="0 0 18 15"><path d="M1.5 2.5 Q5 3 8.5 6 L10.5 13.5 Q7 11 3.5 11 Z" fill="#d6ecf8" stroke="#e0844e" stroke-width="1.1"/><path d="M8.5 6 Q11 3 14.5 1.5 Q16.5 5 16.5 9 Q13 10 10.5 13.5 Z" fill="#eef6fc" stroke="#e0844e" stroke-width="1.1"/><path d="M8.5 6 L10.5 13.5" stroke="#5a8ad0" stroke-width="1.2"/><path d="M4 6 L7 8 M12 5 L14.5 4" stroke="#9ac" stroke-width="0.6"/></svg><div class="ab" style="left:1003px;top:155px;width:5px;height:0;border-top:1px dotted #9aa0a8"></div><div class="ab" style="left:1017px;top:164px;width:0;height:82px;border-left:1px dotted #9aa0a8"></div><div class="ab" style="left:1018px;top:174px;width:9px;height:0;border-top:1px dotted #9aa0a8"></div><div class="ab" style="left:1018px;top:192px;width:9px;height:0;border-top:1px dotted #9aa0a8"></div><div class="ab" style="left:1018px;top:210px;width:9px;height:0;border-top:1px dotted #9aa0a8"></div><div class="ab" style="left:1018px;top:228px;width:9px;height:0;border-top:1px dotted #9aa0a8"></div><div class="ab" style="left:1018px;top:246px;width:9px;height:0;border-top:1px dotted #9aa0a8"></div><div style="font-size:11px;font-weight:bold;line-height:13px;color:#000;white-space:nowrap;position:absolute;left:1051px;top:150px;letter-spacing:0.3px">Customer Focus Checklist</div><div style="font-size:11px;font-weight:bold;line-height:13px;color:#000;white-space:nowrap;position:absolute;left:1200px;width:53px;text-align:right;top:150px;letter-spacing:0.3px">23</div><div style="font-size:11px;font-weight:bold;line-height:13px;color:#000;white-space:nowrap;position:absolute;left:1230px;width:45px;text-align:right;top:150px;letter-spacing:0.3px">23</div><svg class="ab" style="left:1029px;top:167px" width="17" height="16" viewBox="0 0 17 16"><circle cx="5" cy="5" r="3.5" fill="#e8a050"/><path d="M0.5 15 Q1 9 5 9 Q9 9 9.5 15 Z" fill="#3a6ad0"/><circle cx="12" cy="5" r="3.5" fill="#b05a20" stroke="#402010" stroke-width="0.8"/><path d="M7.5 15 Q8 9 12 9 Q16 9 16.5 15 Z" fill="#3aa040"/></svg><div style="font-size:11px;font-weight:bold;line-height:13px;color:#000;white-space:nowrap;position:absolute;left:1051px;top:168px;letter-spacing:0.4px">1.Customer Focus: Overview</div><div style="font-size:11px;font-weight:bold;line-height:13px;color:#000;white-space:nowrap;position:absolute;left:1200px;width:53px;text-align:right;top:168px">3</div><div style="font-size:11px;font-weight:bold;line-height:13px;color:#000;white-space:nowrap;position:absolute;left:1230px;width:45px;text-align:right;top:168px">3</div><svg class="ab" style="left:1030px;top:184px" width="16" height="17" viewBox="0 0 16 17"><path d="M2 1 V16" stroke="#505868" stroke-width="1.6"/><path d="M3 2 Q6 1 9 3 Q12 4 15 2 V10 Q12 12 9 10 Q6 8 3 10 Z" fill="#7a7ae8" stroke="#4a4aa8" stroke-width="0.8"/></svg><div style="font-size:11px;font-weight:bold;line-height:13px;color:#000;white-space:nowrap;position:absolute;left:1051px;top:186px;letter-spacing:0.4px">2.Step #1.&nbsp; The Inputs.</div><div style="font-size:11px;font-weight:bold;line-height:13px;color:#000;white-space:nowrap;position:absolute;left:1200px;width:53px;text-align:right;top:186px">5</div><div style="font-size:11px;font-weight:bold;line-height:13px;color:#000;white-space:nowrap;position:absolute;left:1230px;width:45px;text-align:right;top:186px">5</div><svg class="ab" style="left:1030px;top:203px" width="16" height="16" viewBox="0 0 16 16"><circle cx="11" cy="5" r="4.3" fill="#f6d66a" stroke="#c09a30"/><path d="M8 8 L1.5 14.5 L3 15.5 L5 13.5 L6 14.5 L7 13.5 L6 12.5 L9.5 9" fill="#f6d66a" stroke="#c09a30" stroke-width="0.9"/><circle cx="12" cy="4" r="1.3" fill="#a07a20"/></svg><div style="font-size:11px;font-weight:bold;line-height:13px;color:#000;white-space:nowrap;position:absolute;left:1051px;top:204px;letter-spacing:0.4px">3.Step #2.&nbsp; Customer Needs.</div><div style="font-size:11px;font-weight:bold;line-height:13px;color:#000;white-space:nowrap;position:absolute;left:1200px;width:53px;text-align:right;top:204px">6</div><div style="font-size:11px;font-weight:bold;line-height:13px;color:#000;white-space:nowrap;position:absolute;left:1230px;width:45px;text-align:right;top:204px">6</div><svg class="ab" style="left:1029px;top:220px" width="17" height="17" viewBox="0 0 17 17"><rect x="0.5" y="1.5" width="15" height="12" fill="#f0f6f0" stroke="#2a8a3a"/><path d="M1 13 L7 7 L15 13 Z" fill="#4aaa4a"/><path d="M4 4 L14 16" stroke="#3050a0" stroke-width="2.2"/><path d="M3 3 L6 6" stroke="#e8a040" stroke-width="2.4"/></svg><div style="font-size:11px;font-weight:bold;line-height:13px;color:#000;white-space:nowrap;position:absolute;left:1051px;top:222px;letter-spacing:0.4px">4.Step #3.&nbsp; Solution.</div><div style="font-size:11px;font-weight:bold;line-height:13px;color:#000;white-space:nowrap;position:absolute;left:1200px;width:53px;text-align:right;top:222px">4</div><div style="font-size:11px;font-weight:bold;line-height:13px;color:#000;white-space:nowrap;position:absolute;left:1230px;width:45px;text-align:right;top:222px">4</div><svg class="ab" style="left:1029px;top:238px" width="17" height="17" viewBox="0 0 17 17"><defs><radialGradient id="sm" cx="0.4" cy="0.35" r="0.7"><stop offset="0" stop-color="#fff8a0"/><stop offset="1" stop-color="#e8b800"/></radialGradient></defs><circle cx="8.5" cy="8.5" r="8" fill="url(#sm)" stroke="#c89a00" stroke-width="0.8"/><ellipse cx="6" cy="6" rx="1.2" ry="1.8" fill="#000"/><ellipse cx="11" cy="6" rx="1.2" ry="1.8" fill="#000"/><path d="M3.5 9 Q8.5 15.5 13.5 9 Z" fill="#000"/></svg><div style="font-size:11px;font-weight:bold;line-height:13px;color:#000;white-space:nowrap;position:absolute;left:1051px;top:240px;letter-spacing:0.4px">5.Step #4.&nbsp; Competitive Adva</div><div style="font-size:11px;font-weight:bold;line-height:13px;color:#000;white-space:nowrap;position:absolute;left:1200px;width:53px;text-align:right;top:240px">5</div><div style="font-size:11px;font-weight:bold;line-height:13px;color:#000;white-space:nowrap;position:absolute;left:1230px;width:45px;text-align:right;top:240px">5</div><div class="ab" style="left:986px;top:428px;width:291px;height:574px;border:1px solid #000;border-bottom:none;background:#fff"></div><div class="ab" style="left:988px;top:430px;width:287px;height:18px;background:#fff;border:1px solid #e6e8ee;border-top:none;border-radius:0 0 3px 3px"></div><div class="ab" style="left:991px;top:434px;font-size:11px;line-height:13px;letter-spacing:-0.25px;color:#101828;white-space:nowrap">Filters Bar</div><svg class="ab" style="left:1228px;top:433px" width="15" height="14" viewBox="0 0 15 14"><rect x="0.5" y="0.5" width="13" height="13" rx="1.5" fill="#e4ecf6" stroke="#6f809c"/><rect x="2" y="2" width="10" height="9" fill="#f6f6f8" stroke="#3c4658" stroke-width="1"/><rect x="4.5" y="5" width="5" height="3" fill="#e8eaee" stroke="#3c4658" stroke-width="1"/><rect x="1.5" y="11.5" width="11" height="1.5" fill="#bcd4f0"/></svg><svg class="ab" style="left:1245px;top:433px" width="12" height="14" viewBox="0 0 12 14"><path d="M2.5 1.5 H9.5 L8 3 L8 6 L10.5 8.5 H1.5 L4 6 L4 3 Z" fill="#ececee" stroke="#7c7f86" stroke-width="1"/><circle cx="6.5" cy="4.5" r="1" fill="#8a8d94"/><path d="M6 9 V13.5" stroke="#7c7f86" stroke-width="1.4"/></svg><svg class="ab" style="left:1260px;top:433px" width="14" height="14" viewBox="0 0 14 14"><defs><linearGradient id="cbg428" x1="0" y1="0" x2="0" y2="1"><stop offset="0" stop-color="#f2b8ac"/><stop offset="0.45" stop-color="#e49a8a"/><stop offset="0.5" stop-color="#c4503a"/><stop offset="1" stop-color="#d88878"/></linearGradient></defs><rect x="0.5" y="0.5" width="13" height="13" rx="2" fill="url(#cbg428)" stroke="#4a1a16"/><path d="M4.5 4.5 L9.5 9.5 M9.5 4.5 L4.5 9.5" stroke="#5a2a24" stroke-width="3.2"/><path d="M4.5 4.5 L9.5 9.5 M9.5 4.5 L4.5 9.5" stroke="#fff" stroke-width="1.9"/></svg><div class="ab" style="left:988px;top:450px;width:289px;height:31px;background:linear-gradient(#fdfdfe 0%,#f2f4fa 30%,#d3d9ed 38%,#d6dcef 75%,#e0e5f4 100%)"></div><div class="ab" style="left:992px;top:455px;width:2px;height:2px;background:#9aa0b2;box-shadow:1px 1px 0 #fff"></div><div class="ab" style="left:992px;top:459px;width:2px;height:2px;background:#9aa0b2;box-shadow:1px 1px 0 #fff"></div><div class="ab" style="left:992px;top:463px;width:2px;height:2px;background:#9aa0b2;box-shadow:1px 1px 0 #fff"></div><div class="ab" style="left:992px;top:467px;width:2px;height:2px;background:#9aa0b2;box-shadow:1px 1px 0 #fff"></div><div class="ab" style="left:992px;top:471px;width:2px;height:2px;background:#9aa0b2;box-shadow:1px 1px 0 #fff"></div><div class="ab" style="left:992px;top:475px;width:2px;height:2px;background:#9aa0b2;box-shadow:1px 1px 0 #fff"></div><div class="ab" style="left:997px;top:456px;width:92px;height:21px;background:#a9c9ef;border:1px solid #8d96a4;box-sizing:border-box"></div><div class="ab" style="left:1001px;top:460px;font-size:12px;line-height:15px;color:#7f8a9a;white-space:nowrap">Custom</div><div class="ab" style="left:1082px;top:457px;width:6px;height:19px;background:#f4f4f4;border-left:1px solid #9aa0aa;border-right:1px solid #9aa0aa"></div><svg class="ab" style="left:1083px;top:466px" width="6" height="6"><path d="M0 0 H5 V5 Z" fill="#9a9a9a"/></svg><svg class="ab" style="left:1094px;top:458px" width="18" height="17" viewBox="0 0 18 17"><path d="M1 9 H8 V16 H1 Z" fill="#8a8ed8" stroke="#6f72b8" stroke-width="0.8"/><rect x="2.5" y="9.5" width="4" height="2.5" fill="#e8eaf8"/><path d="M7 1 H13 L16 4 V12 H7 Z" fill="#f4f8fc" stroke="#9ab0d0" stroke-width="0.8"/><path d="M8 15 L12 8 L10 8 L13 4 L16 8 L14 8 L10 16 Z" fill="#46b04a" stroke="#2f8a30" stroke-width="0.6"/></svg><svg class="ab" style="left:1113px;top:463px" width="6" height="4"><path d="M0 0 H5 L2.5 3 Z" fill="#000"/></svg><svg class="ab" style="left:1127px;top:458px" width="18" height="16" viewBox="0 0 18 16"><path d="M2 12 L10 3 Q12 1 14 3 L16 5 Q17 7 15 9 L9 15 H4 Z" fill="#f0f0f0" stroke="#8c8c8c" stroke-width="1.1"/><path d="M1 15 H17" stroke="#8c8c8c"/></svg><svg class="ab" style="left:1153px;top:459px" width="14" height="14" viewBox="0 0 14 14"><path d="M2 2 L12 12 M12 2 L2 12" stroke="#a0a4aa" stroke-width="3.4" stroke-linecap="round"/><path d="M2 2 L12 12 M12 2 L2 12" stroke="#d6d8dc" stroke-width="1.4" stroke-linecap="round"/></svg><svg class="ab" style="left:1175px;top:471px" width="6" height="4"><path d="M0 0 H5 L2.5 3 Z" fill="#000"/></svg><div class="ab" style="left:988px;top:481px;width:289px;height:2px;background:#8a8e96"></div><div class="ab" style="left:988px;top:483px;width:290px;height:489px;background:#efefef;border-left:2px solid #8a8e96;border-right:2px solid #8f9399;box-sizing:border-box"></div><div class="ab" style="left:988px;top:971px;width:289px;height:1px;background:#9a9ea6"></div><div class="ab" style="left:1088px;top:483px;width:1px;height:189px;background:#a0a0a0"></div><div class="ab" style="left:1005px;top:486px;font-size:11px;line-height:13px;letter-spacing:-0.2px;color:#000;white-space:nowrap;width:83px;overflow:hidden">Completion</div><div class="ab" style="left:990px;top:503px;width:286px;height:0;border-top:1px dotted #9a9a9a"></div><div class="ab" style="left:1259px;top:484px;width:16px;height:19px;background:linear-gradient(#fdfdfd 0%,#f4f4f4 40%,#d6d6d6 100%);border:1px solid #808080;box-shadow:inset 1px 1px 0 #fff;box-sizing:border-box"><svg class="ab" style="left:3px;top:7px" width="9" height="5"><path d="M0 0 H8 L4 4.5 Z" fill="#000"/></svg></div><div class="ab" style="left:1005px;top:507px;font-size:11px;line-height:13px;letter-spacing:-0.2px;color:#000;white-space:nowrap;width:83px;overflow:hidden">Due Date</div><div class="ab" style="left:990px;top:524px;width:286px;height:0;border-top:1px dotted #9a9a9a"></div><div class="ab" style="left:1259px;top:505px;width:16px;height:19px;background:linear-gradient(#fdfdfd 0%,#f4f4f4 40%,#d6d6d6 100%);border:1px solid #808080;box-shadow:inset 1px 1px 0 #fff;box-sizing:border-box"><svg class="ab" style="left:3px;top:7px" width="9" height="5"><path d="M0 0 H8 L4 4.5 Z" fill="#000"/></svg></div><div class="ab" style="left:1005px;top:528px;font-size:11px;line-height:13px;letter-spacing:-0.2px;color:#000;white-space:nowrap;width:83px;overflow:hidden">Status</div><div class="ab" style="left:990px;top:545px;width:286px;height:0;border-top:1px dotted #9a9a9a"></div><div class="ab" style="left:1259px;top:526px;width:16px;height:19px;background:linear-gradient(#fdfdfd 0%,#f4f4f4 40%,#d6d6d6 100%);border:1px solid #808080;box-shadow:inset 1px 1px 0 #fff;box-sizing:border-box"><svg class="ab" style="left:3px;top:7px" width="9" height="5"><path d="M0 0 H8 L4 4.5 Z" fill="#000"/></svg></div><div class="ab" style="left:1005px;top:549px;font-size:11px;line-height:13px;letter-spacing:-0.2px;color:#000;white-space:nowrap;width:83px;overflow:hidden">Priority</div><div class="ab" style="left:990px;top:566px;width:286px;height:0;border-top:1px dotted #9a9a9a"></div><div class="ab" style="left:1259px;top:547px;width:16px;height:19px;background:linear-gradient(#fdfdfd 0%,#f4f4f4 40%,#d6d6d6 100%);border:1px solid #808080;box-shadow:inset 1px 1px 0 #fff;box-sizing:border-box"><svg class="ab" style="left:3px;top:7px" width="9" height="5"><path d="M0 0 H8 L4 4.5 Z" fill="#000"/></svg></div><div class="ab" style="left:1005px;top:570px;font-size:11px;line-height:13px;letter-spacing:-0.2px;color:#000;white-space:nowrap;width:83px;overflow:hidden">Task Name</div><div class="ab" style="left:990px;top:587px;width:286px;height:0;border-top:1px dotted #9a9a9a"></div><div class="ab" style="left:1005px;top:591px;font-size:11px;line-height:13px;letter-spacing:-0.2px;color:#000;white-space:nowrap;width:83px;overflow:hidden">Date Created</div><div class="ab" style="left:990px;top:608px;width:286px;height:0;border-top:1px dotted #9a9a9a"></div><div class="ab" style="left:1259px;top:589px;width:16px;height:19px;background:linear-gradient(#fdfdfd 0%,#f4f4f4 40%,#d6d6d6 100%);border:1px solid #808080;box-shadow:inset 1px 1px 0 #fff;box-sizing:border-box"><svg class="ab" style="left:3px;top:7px" width="9" height="5"><path d="M0 0 H8 L4 4.5 Z" fill="#000"/></svg></div><div class="ab" style="left:1005px;top:612px;font-size:11px;line-height:13px;letter-spacing:-0.2px;color:#000;white-space:nowrap;width:83px;overflow:hidden">Date Last Modifie</div><div class="ab" style="left:990px;top:629px;width:286px;height:0;border-top:1px dotted #9a9a9a"></div><div class="ab" style="left:1259px;top:610px;width:16px;height:19px;background:linear-gradient(#fdfdfd 0%,#f4f4f4 40%,#d6d6d6 100%);border:1px solid #808080;box-shadow:inset 1px 1px 0 #fff;box-sizing:border-box"><svg class="ab" style="left:3px;top:7px" width="9" height="5"><path d="M0 0 H8 L4 4.5 Z" fill="#000"/></svg></div><div class="ab" style="left:1005px;top:633px;font-size:11px;line-height:13px;letter-spacing:-0.2px;color:#000;white-space:nowrap;width:83px;overflow:hidden">Date Opened</div><div class="ab" style="left:990px;top:650px;width:286px;height:0;border-top:1px dotted #9a9a9a"></div><div class="ab" style="left:1259px;top:631px;width:16px;height:19px;background:linear-gradient(#fdfdfd 0%,#f4f4f4 40%,#d6d6d6 100%);border:1px solid #808080;box-shadow:inset 1px 1px 0 #fff;box-sizing:border-box"><svg class="ab" style="left:3px;top:7px" width="9" height="5"><path d="M0 0 H8 L4 4.5 Z" fill="#000"/></svg></div><div class="ab" style="left:1005px;top:654px;font-size:11px;line-height:13px;letter-spacing:-0.2px;color:#000;white-space:nowrap;width:83px;overflow:hidden">Date Completed</div><div class="ab" style="left:990px;top:671px;width:286px;height:1px;background:#a0a0a0"></div><div class="ab" style="left:1259px;top:652px;width:16px;height:19px;background:linear-gradient(#fdfdfd 0%,#f4f4f4 40%,#d6d6d6 100%);border:1px solid #808080;box-shadow:inset 1px 1px 0 #fff;box-sizing:border-box"><svg class="ab" style="left:3px;top:7px" width="9" height="5"><path d="M0 0 H8 L4 4.5 Z" fill="#000"/></svg></div><div class="ab" style="left:988px;top:972px;width:289px;height:30px;background:#fff"></div><div class="ab" style="left:992px;top:977px;width:55px;height:21px;background:#fff;border:1px solid #9a9ea6;border-top:none"></div><div class="ab" style="left:990px;top:975px;width:3px;height:2px;border-left:1px solid #9a9ea6;border-top:1px solid #9a9ea6"></div><div class="ab" style="left:1048px;top:978px;width:77px;height:20px;background:#d8d8d8;border:1px solid #9a9ea6;border-top:none;border-left:1px solid #9a9ea6"></div><div class="ab" style="left:1125px;top:978px;width:152px;height:0;border-top:1px solid #c8c8c8"></div><div class="ab" style="left:996px;top:982px;font-size:11px;line-height:13px;letter-spacing:-0.3px;color:#101418;white-space:nowrap">Filters Bar</div><div class="ab" style="left:1052px;top:982px;font-size:11px;line-height:13px;letter-spacing:-0.2px;color:#101418;white-space:nowrap">Navigation Bar</div><div class="ab" style="left:986px;top:1002px;width:293px;height:2px;background:#000"></div><div class="ab" style="left:0;top:1003px;width:986px;height:1px;background:#fbfbfb"></div><div class="ab" style="left:0;top:1004px;width:1280px;height:1px;background:#a8a8a8"></div><div class="ab" style="left:0;top:1005px;width:1280px;height:16px;background:#efecea"></div><div class="ab" style="left:0;top:1021px;width:1280px;height:1px;background:#fafafa"></div><div class="ab" style="left:0;top:1022px;width:1280px;height:1px;background:#2a2c32"></div><div class="ab" style="left:0;top:1023px;width:1280px;height:1px;background:#6a6c70"></div></body></html>
